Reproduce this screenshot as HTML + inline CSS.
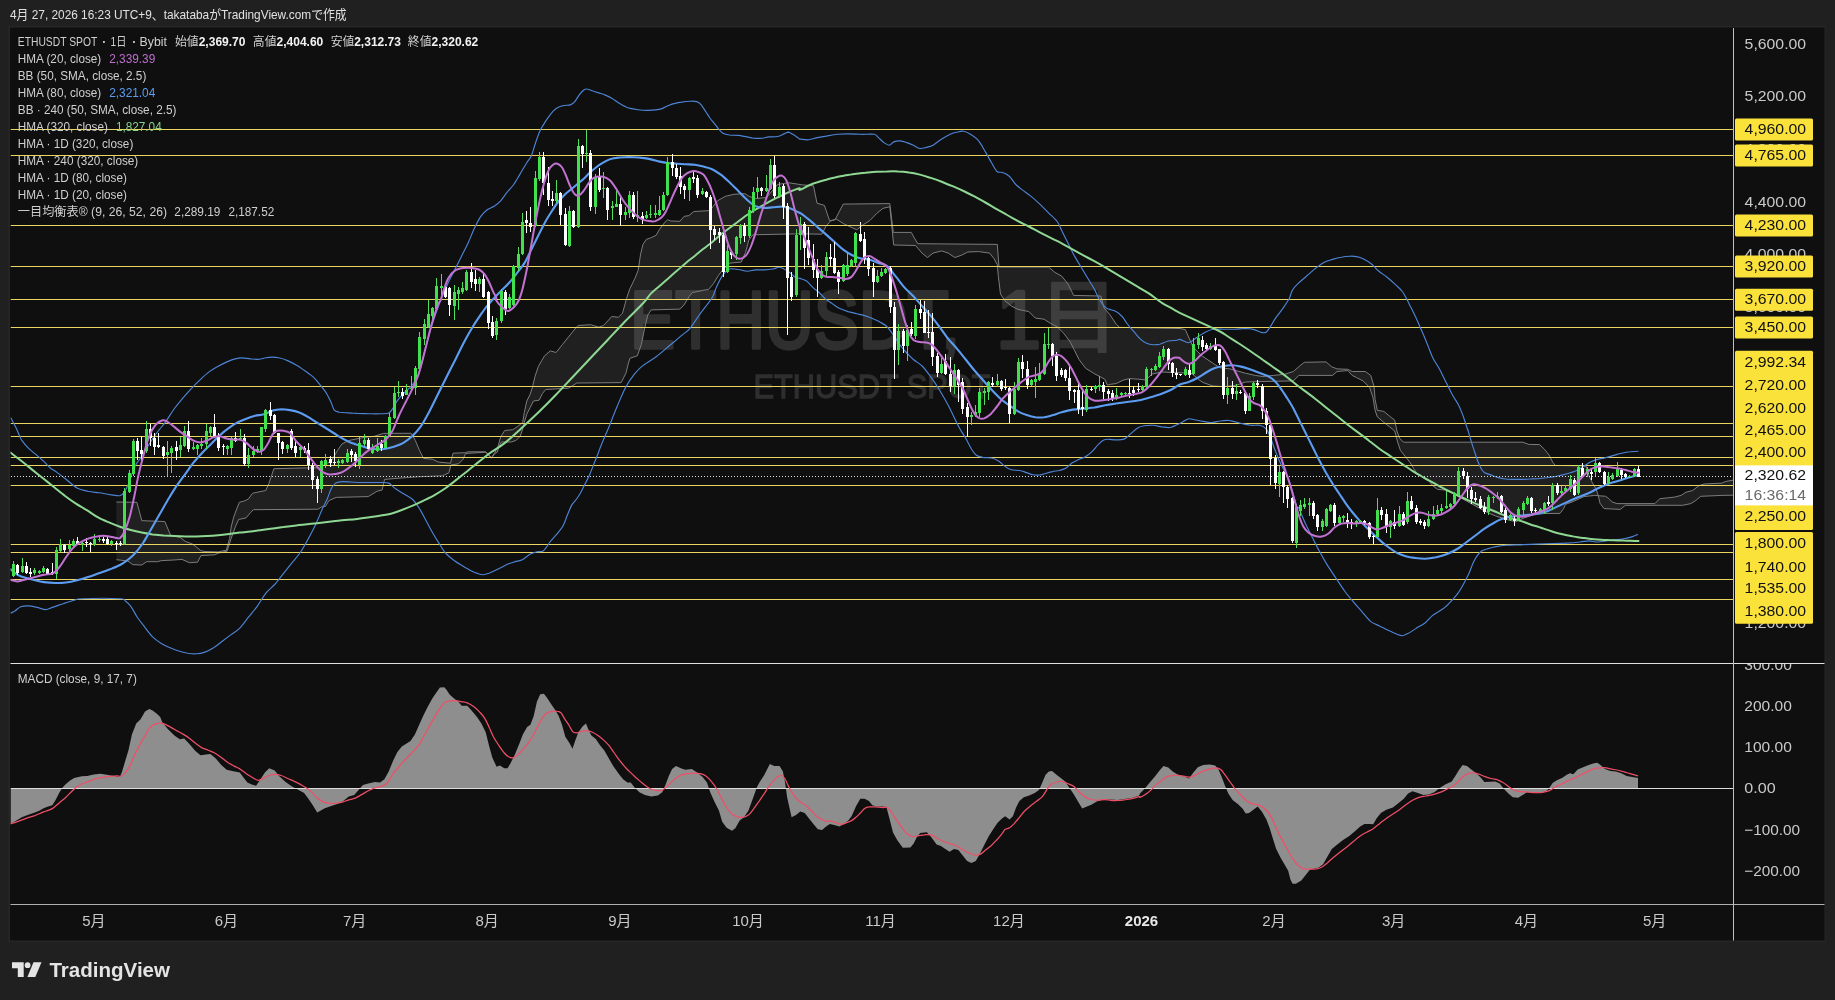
<!DOCTYPE html><html lang="ja"><head><meta charset="utf-8"><title>ETHUSDT SPOT chart</title>
<style>html,body{margin:0;padding:0;background:#202020;overflow:hidden}svg{display:block}text{font-family:"Liberation Sans", "Noto Sans CJK JP", sans-serif;white-space:pre}</style></head><body>
<svg width="1835" height="1000" viewBox="0 0 1835 1000">
<g>
<rect x="0" y="0" width="1835" height="1000" fill="#202020"/>
<rect x="8.5" y="26" width="1817" height="916" fill="#262626"/>
<rect x="10" y="27.5" width="1814.5" height="913" fill="#0f0f0f"/>
<defs><filter id="nf" x="-5%" y="-30%" width="110%" height="160%"><feOffset dx="0" dy="0"/></filter><clipPath id="cm"><rect x="10.5" y="28" width="1723" height="635"/></clipPath><clipPath id="cd"><rect x="10.5" y="664" width="1723" height="240"/></clipPath><clipPath id="ca"><rect x="1734" y="28" width="90.5" height="635.5"/></clipPath><clipPath id="cb"><rect x="1734" y="664" width="90.5" height="240"/></clipPath></defs>
<g fill="#2b2b2b">
<g filter="url(#nf)"><text x="630.0" y="348.0" font-size="81" fill="#2f2f2f" text-anchor="start" font-weight="normal" textLength="330.0" lengthAdjust="spacingAndGlyphs" stroke="#2f2f2f" stroke-width="3.4" stroke-linejoin="round">ETHUSDT,</text></g>
<g filter="url(#nf)"><text x="996.0" y="348.0" font-size="81" fill="#2f2f2f" text-anchor="start" font-weight="normal" stroke="#2f2f2f" stroke-width="3.4" stroke-linejoin="round">1</text></g>
<g filter="url(#nf)"><text x="1038.0" y="346.0" font-size="81" fill="#2f2f2f" text-anchor="start" font-weight="normal" stroke="#2f2f2f" stroke-width="2.4" stroke-linejoin="round">日</text></g>
<g filter="url(#nf)"><text x="753.5" y="397.5" font-size="33.5" fill="#2f2f2f" text-anchor="start" font-weight="normal" textLength="237.0" lengthAdjust="spacingAndGlyphs" stroke="#2f2f2f" stroke-width="1.3">ETHUSDT SPOT</text></g>
</g>
<g clip-path="url(#cm)">
<path d="M116.4,502.0 L136.9,502.3 L141.8,520.7 L164.8,521.5 L170.5,535.1 L180.4,537.6 L185.3,541.4 L192.7,544.1 L196.8,547.4 L200.9,550.7 L205.0,551.5 L218.1,551.9 L226.3,550.2 L229.6,538.4 L231.2,526.9 L233.7,517.1 L237.0,508.1 L239.4,502.3 L244.3,501.0 L248.4,499.0 L252.5,493.3 L257.5,492.2 L265.7,490.5 L268.9,483.5 L271.4,476.1 L273.9,468.7 L306.7,467.9 L318.0,467.8 L331.0,461.3 L337.6,450.4 L342.0,443.9 L348.5,440.6 L361.6,437.8 L374.7,436.2 L383.4,433.4 L393.1,433.3 L411.2,433.3 L415.3,440.4 L419.4,450.2 L423.5,458.4 L432.5,459.2 L438.2,462.0 L450.5,463.3 L453.0,453.2 L465.3,452.7 L467.7,451.8 L485.8,451.8 L491.5,457.6 L494.8,452.7 L498.1,446.1 L500.6,437.1 L504.7,430.5 L512.9,429.7 L517.8,426.4 L522.7,422.3 L524.3,412.5 L526.8,401.0 L530.1,394.4 L532.5,387.1 L535.0,376.4 L538.3,366.6 L541.6,360.8 L544.6,355.8 L550.3,350.9 L556.1,352.5 L562.6,344.3 L569.2,336.1 L575.8,327.9 L578.2,325.5 L590.5,324.7 L598.7,327.1 L603.6,325.5 L611.8,316.5 L618.4,317.3 L622.5,313.2 L626.6,298.4 L629.9,288.6 L634.8,278.7 L638.1,270.5 L640.6,254.1 L643.0,244.3 L646.3,239.4 L651.2,237.7 L656.1,235.3 L659.4,229.5 L664.3,223.0 L667.6,219.7 L670.9,221.0 L679.9,221.3 L684.0,216.4 L688.9,215.6 L693.9,211.5 L709.9,210.6 L713.2,206.3 L717.5,200.8 L725.2,196.4 L733.9,194.3 L744.8,193.6 L749.2,196.4 L755.7,198.6 L766.6,197.5 L777.5,184.5 L788.4,182.7 L802.6,184.9 L813.5,185.8 L817.0,203.2 L824.4,205.4 L829.6,220.6 L834.9,220.0 L843.2,204.1 L889.8,203.6 L893.3,232.4 L911.2,232.4 L917.7,243.7 L997.3,244.4 L999.0,267.0 L1048.5,267.0 L1055.0,272.5 L1061.6,276.0 L1068.1,284.0 L1073.6,295.4 L1100.8,296.0 L1104.1,308.0 L1109.8,314.6 L1116.4,324.4 L1119.7,327.4 L1180.0,328.5 L1185.3,329.6 L1193.0,347.0 L1201.8,355.8 L1214.9,364.5 L1220.3,367.8 L1230.0,368.9 L1245.4,373.2 L1255.2,375.4 L1262.8,376.5 L1273.7,375.4 L1284.6,374.3 L1293.4,371.5 L1298.8,366.7 L1304.3,362.3 L1326.0,361.9 L1331.5,366.7 L1337.0,368.9 L1347.8,369.3 L1352.2,371.5 L1365.3,371.5 L1370.7,375.4 L1374.0,386.3 L1375.1,399.4 L1377.3,410.3 L1383.8,411.4 L1390.4,416.8 L1394.7,420.1 L1396.9,431.0 L1399.8,438.4 L1403.4,442.2 L1522.8,442.2 L1528.8,444.4 L1539.6,444.6 L1544.4,449.2 L1549.2,455.2 L1552.8,462.4 L1555.2,465.4 L1576.8,465.8 L1586.0,466.0 L1589.4,476.8 L1592.4,482.8 L1596.0,488.8 L1598.4,496.0 L1600.0,503.2 L1604.0,508.6 L1620.4,509.4 L1625.3,505.3 L1682.7,505.3 L1690.9,503.6 L1695.9,500.4 L1700.8,496.3 L1722.1,495.4 L1740.0,495.1 L1740.0,479.0 L1725.4,481.5 L1722.1,483.1 L1704.1,484.0 L1699.1,485.6 L1692.6,490.5 L1686.0,492.2 L1681.1,495.4 L1674.5,497.1 L1659.8,498.7 L1654.9,503.6 L1617.1,503.6 L1612.2,502.0 L1608.9,498.7 L1605.7,496.3 L1594.8,495.4 L1584.0,496.6 L1572.0,502.0 L1565.4,504.4 L1563.6,508.6 L1560.0,513.4 L1544.4,513.5 L1534.8,514.5 L1524.0,518.0 L1515.7,521.8 L1507.0,519.6 L1495.2,515.8 L1488.0,512.8 L1449.6,491.8 L1444.8,490.0 L1437.6,489.4 L1432.8,485.8 L1428.0,479.8 L1422.0,476.8 L1417.2,473.8 L1413.6,468.4 L1410.0,462.4 L1405.2,456.4 L1400.4,450.4 L1398.0,443.2 L1394.7,431.0 L1389.3,426.6 L1383.8,422.3 L1377.3,416.8 L1375.1,410.3 L1372.9,397.2 L1369.6,387.4 L1363.1,380.9 L1356.6,377.6 L1352.2,375.4 L1347.8,370.6 L1337.0,371.5 L1332.6,375.4 L1298.8,375.4 L1293.4,380.9 L1261.7,381.5 L1245.4,382.0 L1236.7,385.2 L1223.6,386.7 L1212.7,385.9 L1203.0,382.5 L1198.4,379.4 L1192.0,373.6 L1185.0,373.0 L1162.0,372.0 L1152.0,374.0 L1146.0,380.0 L1141.0,379.4 L1129.5,378.6 L1123.0,380.2 L1116.4,383.5 L1110.7,384.3 L1107.4,385.1 L1104.9,379.4 L1100.8,377.0 L1094.3,373.7 L1085.6,368.2 L1079.0,359.5 L1074.7,350.8 L1070.3,342.1 L1063.8,333.4 L1057.2,326.8 L1050.7,323.5 L1044.1,319.2 L1035.4,318.1 L1028.9,311.6 L1018.0,309.4 L1011.4,306.1 L1004.9,300.7 L1000.5,294.1 L998.4,276.7 L997.3,264.7 L994.0,258.6 L989.6,253.1 L978.7,251.6 L967.8,252.0 L961.3,255.3 L954.8,257.5 L948.2,253.1 L941.7,250.9 L933.0,253.1 L927.5,257.5 L922.0,253.1 L915.5,245.5 L893.7,245.0 L889.8,206.7 L882.8,208.4 L876.3,213.9 L870.0,220.4 L863.2,224.8 L856.7,229.8 L843.6,223.7 L836.0,218.9 L830.5,221.1 L826.2,225.9 L821.8,234.2 L800.0,233.8 L752.9,234.8 L748.8,240.2 L745.5,252.5 L741.4,262.0 L729.9,263.1 L723.4,268.9 L718.5,275.4 L713.5,283.6 L708.6,289.4 L703.7,290.2 L692.2,292.7 L688.9,296.8 L684.0,305.0 L679.9,309.1 L651.2,309.9 L647.9,314.8 L644.7,327.9 L641.4,344.3 L637.3,355.8 L629.9,358.3 L628.2,364.0 L626.0,373.1 L621.1,382.6 L576.8,383.0 L568.6,388.2 L545.7,389.5 L542.4,393.6 L539.1,400.2 L533.4,401.0 L530.1,407.6 L526.8,414.1 L524.3,422.3 L522.7,428.9 L520.2,436.3 L516.1,440.4 L511.2,442.0 L501.4,442.0 L498.9,446.9 L497.3,452.2 L494.8,453.5 L491.5,458.1 L488.2,455.1 L485.8,452.2 L465.6,453.5 L462.8,459.7 L458.4,463.8 L450.9,465.0 L448.9,472.8 L442.3,475.8 L417.7,476.8 L400.0,478.1 L384.6,479.4 L382.1,490.0 L377.2,491.2 L368.2,496.6 L336.2,497.4 L328.8,500.7 L325.5,506.4 L321.4,506.9 L318.1,509.2 L253.4,509.7 L250.9,512.2 L246.0,517.9 L238.6,519.5 L235.3,526.9 L231.2,538.4 L227.1,551.2 L218.1,553.2 L214.8,554.8 L200.9,555.6 L197.6,562.2 L189.4,562.7 L182.0,559.4 L172.2,560.1 L161.5,560.6 L157.4,561.7 L146.7,561.7 L141.8,565.0 L132.8,564.7 L127.9,561.0 L116.4,559.7 Z" fill="#ffffff" fill-opacity="0.075" stroke="none"/>
<path d="M116.4,502.0 L136.9,502.3 L141.8,520.7 L164.8,521.5 L170.5,535.1 L180.4,537.6 L185.3,541.4 L192.7,544.1 L196.8,547.4 L200.9,550.7 L205.0,551.5 L218.1,551.9 L226.3,550.2 L229.6,538.4 L231.2,526.9 L233.7,517.1 L237.0,508.1 L239.4,502.3 L244.3,501.0 L248.4,499.0 L252.5,493.3 L257.5,492.2 L265.7,490.5 L268.9,483.5 L271.4,476.1 L273.9,468.7 L306.7,467.9 L318.0,467.8 L331.0,461.3 L337.6,450.4 L342.0,443.9 L348.5,440.6 L361.6,437.8 L374.7,436.2 L383.4,433.4 L393.1,433.3 L411.2,433.3 L415.3,440.4 L419.4,450.2 L423.5,458.4 L432.5,459.2 L438.2,462.0 L450.5,463.3 L453.0,453.2 L465.3,452.7 L467.7,451.8 L485.8,451.8 L491.5,457.6 L494.8,452.7 L498.1,446.1 L500.6,437.1 L504.7,430.5 L512.9,429.7 L517.8,426.4 L522.7,422.3 L524.3,412.5 L526.8,401.0 L530.1,394.4 L532.5,387.1 L535.0,376.4 L538.3,366.6 L541.6,360.8 L544.6,355.8 L550.3,350.9 L556.1,352.5 L562.6,344.3 L569.2,336.1 L575.8,327.9 L578.2,325.5 L590.5,324.7 L598.7,327.1 L603.6,325.5 L611.8,316.5 L618.4,317.3 L622.5,313.2 L626.6,298.4 L629.9,288.6 L634.8,278.7 L638.1,270.5 L640.6,254.1 L643.0,244.3 L646.3,239.4 L651.2,237.7 L656.1,235.3 L659.4,229.5 L664.3,223.0 L667.6,219.7 L670.9,221.0 L679.9,221.3 L684.0,216.4 L688.9,215.6 L693.9,211.5 L709.9,210.6 L713.2,206.3 L717.5,200.8 L725.2,196.4 L733.9,194.3 L744.8,193.6 L749.2,196.4 L755.7,198.6 L766.6,197.5 L777.5,184.5 L788.4,182.7 L802.6,184.9 L813.5,185.8 L817.0,203.2 L824.4,205.4 L829.6,220.6 L834.9,220.0 L843.2,204.1 L889.8,203.6 L893.3,232.4 L911.2,232.4 L917.7,243.7 L997.3,244.4 L999.0,267.0 L1048.5,267.0 L1055.0,272.5 L1061.6,276.0 L1068.1,284.0 L1073.6,295.4 L1100.8,296.0 L1104.1,308.0 L1109.8,314.6 L1116.4,324.4 L1119.7,327.4 L1180.0,328.5 L1185.3,329.6 L1193.0,347.0 L1201.8,355.8 L1214.9,364.5 L1220.3,367.8 L1230.0,368.9 L1245.4,373.2 L1255.2,375.4 L1262.8,376.5 L1273.7,375.4 L1284.6,374.3 L1293.4,371.5 L1298.8,366.7 L1304.3,362.3 L1326.0,361.9 L1331.5,366.7 L1337.0,368.9 L1347.8,369.3 L1352.2,371.5 L1365.3,371.5 L1370.7,375.4 L1374.0,386.3 L1375.1,399.4 L1377.3,410.3 L1383.8,411.4 L1390.4,416.8 L1394.7,420.1 L1396.9,431.0 L1399.8,438.4 L1403.4,442.2 L1522.8,442.2 L1528.8,444.4 L1539.6,444.6 L1544.4,449.2 L1549.2,455.2 L1552.8,462.4 L1555.2,465.4 L1576.8,465.8 L1586.0,466.0 L1589.4,476.8 L1592.4,482.8 L1596.0,488.8 L1598.4,496.0 L1600.0,503.2 L1604.0,508.6 L1620.4,509.4 L1625.3,505.3 L1682.7,505.3 L1690.9,503.6 L1695.9,500.4 L1700.8,496.3 L1722.1,495.4 L1740.0,495.1" fill="none" stroke="#7c7c7c" stroke-width="1" stroke-linejoin="round"/>
<path d="M116.4,559.7 L127.9,561.0 L132.8,564.7 L141.8,565.0 L146.7,561.7 L157.4,561.7 L161.5,560.6 L172.2,560.1 L182.0,559.4 L189.4,562.7 L197.6,562.2 L200.9,555.6 L214.8,554.8 L218.1,553.2 L227.1,551.2 L231.2,538.4 L235.3,526.9 L238.6,519.5 L246.0,517.9 L250.9,512.2 L253.4,509.7 L318.1,509.2 L321.4,506.9 L325.5,506.4 L328.8,500.7 L336.2,497.4 L368.2,496.6 L377.2,491.2 L382.1,490.0 L384.6,479.4 L400.0,478.1 L417.7,476.8 L442.3,475.8 L448.9,472.8 L450.9,465.0 L458.4,463.8 L462.8,459.7 L465.6,453.5 L485.8,452.2 L488.2,455.1 L491.5,458.1 L494.8,453.5 L497.3,452.2 L498.9,446.9 L501.4,442.0 L511.2,442.0 L516.1,440.4 L520.2,436.3 L522.7,428.9 L524.3,422.3 L526.8,414.1 L530.1,407.6 L533.4,401.0 L539.1,400.2 L542.4,393.6 L545.7,389.5 L568.6,388.2 L576.8,383.0 L621.1,382.6 L626.0,373.1 L628.2,364.0 L629.9,358.3 L637.3,355.8 L641.4,344.3 L644.7,327.9 L647.9,314.8 L651.2,309.9 L679.9,309.1 L684.0,305.0 L688.9,296.8 L692.2,292.7 L703.7,290.2 L708.6,289.4 L713.5,283.6 L718.5,275.4 L723.4,268.9 L729.9,263.1 L741.4,262.0 L745.5,252.5 L748.8,240.2 L752.9,234.8 L800.0,233.8 L821.8,234.2 L826.2,225.9 L830.5,221.1 L836.0,218.9 L843.6,223.7 L856.7,229.8 L863.2,224.8 L870.0,220.4 L876.3,213.9 L882.8,208.4 L889.8,206.7 L893.7,245.0 L915.5,245.5 L922.0,253.1 L927.5,257.5 L933.0,253.1 L941.7,250.9 L948.2,253.1 L954.8,257.5 L961.3,255.3 L967.8,252.0 L978.7,251.6 L989.6,253.1 L994.0,258.6 L997.3,264.7 L998.4,276.7 L1000.5,294.1 L1004.9,300.7 L1011.4,306.1 L1018.0,309.4 L1028.9,311.6 L1035.4,318.1 L1044.1,319.2 L1050.7,323.5 L1057.2,326.8 L1063.8,333.4 L1070.3,342.1 L1074.7,350.8 L1079.0,359.5 L1085.6,368.2 L1094.3,373.7 L1100.8,377.0 L1104.9,379.4 L1107.4,385.1 L1110.7,384.3 L1116.4,383.5 L1123.0,380.2 L1129.5,378.6 L1141.0,379.4 L1146.0,380.0 L1152.0,374.0 L1162.0,372.0 L1185.0,373.0 L1192.0,373.6 L1198.4,379.4 L1203.0,382.5 L1212.7,385.9 L1223.6,386.7 L1236.7,385.2 L1245.4,382.0 L1261.7,381.5 L1293.4,380.9 L1298.8,375.4 L1332.6,375.4 L1337.0,371.5 L1347.8,370.6 L1352.2,375.4 L1356.6,377.6 L1363.1,380.9 L1369.6,387.4 L1372.9,397.2 L1375.1,410.3 L1377.3,416.8 L1383.8,422.3 L1389.3,426.6 L1394.7,431.0 L1398.0,443.2 L1400.4,450.4 L1405.2,456.4 L1410.0,462.4 L1413.6,468.4 L1417.2,473.8 L1422.0,476.8 L1428.0,479.8 L1432.8,485.8 L1437.6,489.4 L1444.8,490.0 L1449.6,491.8 L1488.0,512.8 L1495.2,515.8 L1507.0,519.6 L1515.7,521.8 L1524.0,518.0 L1534.8,514.5 L1544.4,513.5 L1560.0,513.4 L1563.6,508.6 L1565.4,504.4 L1572.0,502.0 L1584.0,496.6 L1594.8,495.4 L1605.7,496.3 L1608.9,498.7 L1612.2,502.0 L1617.1,503.6 L1654.9,503.6 L1659.8,498.7 L1674.5,497.1 L1681.1,495.4 L1686.0,492.2 L1692.6,490.5 L1699.1,485.6 L1704.1,484.0 L1722.1,483.1 L1725.4,481.5 L1740.0,479.0" fill="none" stroke="#7c7c7c" stroke-width="1" stroke-linejoin="round"/>
<rect x="10.5" y="129.0" width="1723" height="1" fill="#ecd662"/>
<rect x="10.5" y="155.0" width="1723" height="1" fill="#ecd662"/>
<rect x="10.5" y="225.0" width="1723" height="1" fill="#ecd662"/>
<rect x="10.5" y="266.0" width="1723" height="1" fill="#ecd662"/>
<rect x="10.5" y="299.0" width="1723" height="1" fill="#ecd662"/>
<rect x="10.5" y="327.0" width="1723" height="1" fill="#ecd662"/>
<rect x="10.5" y="386.0" width="1723" height="1" fill="#ecd662"/>
<rect x="10.5" y="423.0" width="1723" height="1" fill="#ecd662"/>
<rect x="10.5" y="436.0" width="1723" height="1" fill="#ecd662"/>
<rect x="10.5" y="457.0" width="1723" height="1" fill="#ecd662"/>
<rect x="10.5" y="465.0" width="1723" height="1" fill="#ecd662"/>
<rect x="10.5" y="485.0" width="1723" height="1" fill="#ecd662"/>
<rect x="10.5" y="544.0" width="1723" height="1" fill="#ecd662"/>
<rect x="10.5" y="552.0" width="1723" height="1" fill="#ecd662"/>
<rect x="10.5" y="579.0" width="1723" height="1" fill="#ecd662"/>
<rect x="10.5" y="599.0" width="1723" height="1" fill="#ecd662"/>
<path d="M10.6,417.6 C11.3,419.0 13.9,423.4 15.4,426.4 C16.9,429.4 18.7,434.0 19.8,436.3 C20.8,438.6 20.6,438.8 22.0,440.7 C23.4,442.6 26.5,446.3 28.6,448.4 C30.7,450.5 32.7,451.8 35.2,453.9 C37.7,456.0 41.5,459.3 44.0,461.6 C46.4,463.9 48.5,466.4 50.6,468.2 C52.7,469.9 54.7,470.8 57.2,472.6 C59.6,474.3 62.8,476.7 66.0,479.2 C69.1,481.6 73.5,486.0 77.0,488.0 C80.5,489.9 84.5,490.5 88.0,491.3 C91.5,492.0 95.4,492.3 99.0,492.8 C102.5,493.3 106.6,494.1 110.0,494.6 C113.3,495.0 117.6,496.0 119.9,495.7 C122.1,495.3 122.9,494.3 124.3,492.4 C125.7,490.4 127.4,486.6 128.7,483.6 C129.9,480.6 130.7,476.8 132.0,473.7 C133.2,470.5 134.8,466.5 136.4,463.8 C137.9,461.1 139.6,459.8 141.4,456.9 C143.3,454.1 145.5,449.9 148.0,446.0 C150.4,442.2 153.9,436.8 156.7,433.0 C159.5,429.1 162.6,425.9 165.4,422.1 C168.2,418.2 171.3,412.8 174.1,409.0 C176.9,405.2 180.0,401.4 182.8,398.1 C185.6,394.8 188.8,391.2 191.6,388.3 C194.3,385.3 197.5,382.2 200.3,379.6 C203.1,376.9 206.2,374.0 209.0,371.9 C211.8,369.8 214.9,368.1 217.7,366.5 C220.5,364.9 223.6,363.3 226.4,362.1 C229.2,360.9 232.7,359.6 235.1,358.9 C237.6,358.2 239.2,357.8 241.7,357.8 C244.1,357.8 247.6,358.6 250.4,358.9 C253.2,359.1 256.7,359.5 259.1,359.3 C261.6,359.1 263.6,358.1 265.7,357.8 C267.8,357.4 270.1,357.1 272.2,357.1 C274.3,357.1 276.3,357.2 278.7,357.8 C281.2,358.3 284.7,359.4 287.5,360.6 C290.3,361.8 293.4,363.3 296.2,365.0 C299.0,366.6 302.1,368.9 304.9,370.8 C307.7,372.8 311.2,375.1 313.6,377.4 C316.1,379.7 318.1,382.4 320.2,385.0 C322.3,387.6 325.0,390.9 326.7,393.7 C328.4,396.5 329.8,399.8 331.1,402.5 C332.3,405.1 332.9,408.5 334.3,410.1 C335.7,411.7 337.5,411.8 339.8,412.3 C342.0,412.7 345.7,412.7 348.5,412.9 C351.3,413.1 353.7,413.2 357.2,413.4 C360.7,413.5 366.5,413.7 370.3,413.8 C374.1,413.9 378.2,413.9 381.2,413.8 C384.2,413.6 386.9,413.9 388.8,412.9 C390.7,412.0 391.9,409.8 393.2,407.9 C394.5,406.1 395.2,403.6 396.8,401.4 C398.4,399.1 400.9,396.3 403.4,393.7 C405.8,391.1 409.6,388.2 412.1,385.0 C414.5,381.9 416.5,379.7 418.6,374.1 C420.7,368.5 422.9,357.9 425.0,350.0 C427.1,342.1 429.6,332.7 432.0,325.0 C434.4,317.3 437.4,308.8 440.0,302.0 C442.6,295.2 446.0,287.8 448.3,282.5 C450.7,277.3 452.8,273.7 454.9,269.5 C457.0,265.3 459.3,260.6 461.4,256.4 C463.5,252.2 465.9,247.8 468.0,243.3 C470.0,238.8 472.4,232.4 474.5,228.0 C476.6,223.7 478.9,219.0 481.0,216.1 C483.1,213.1 485.5,211.1 487.6,209.5 C489.7,208.0 492.0,207.6 494.1,206.3 C496.2,204.9 498.6,203.1 500.7,200.8 C502.7,198.5 505.1,194.7 507.2,192.1 C509.3,189.5 511.6,187.4 513.7,184.5 C515.8,181.5 518.2,177.0 520.3,173.6 C522.4,170.1 525.1,165.4 526.8,162.7 C528.6,159.9 529.8,159.3 531.2,156.1 C532.6,153.0 534.1,147.0 535.5,143.0 C536.9,139.0 538.5,134.2 539.9,131.0 C541.3,127.9 542.9,125.7 544.3,123.4 C545.6,121.1 547.2,118.8 548.6,116.9 C550.0,115.0 551.6,112.9 553.0,111.4 C554.4,110.0 555.6,108.7 557.3,107.7 C559.1,106.8 561.8,106.0 563.9,105.5 C566.0,105.1 568.7,105.5 570.4,104.9 C572.2,104.3 573.4,103.2 574.8,101.6 C576.2,100.0 577.7,96.9 579.1,95.1 C580.5,93.3 582.3,91.3 583.5,90.3 C584.7,89.3 585.4,88.9 586.8,89.0 C588.2,89.0 590.3,90.1 592.2,90.7 C594.1,91.3 596.7,92.2 598.7,92.9 C600.8,93.6 603.2,94.2 605.3,95.1 C607.4,96.0 609.7,97.1 611.8,98.3 C613.9,99.6 616.3,101.4 618.4,102.7 C620.5,104.0 622.8,105.5 624.9,106.4 C627.0,107.4 629.4,108.1 631.4,108.6 C633.5,109.1 635.5,109.4 638.0,109.7 C640.4,110.0 643.9,110.3 646.7,110.3 C649.5,110.4 653.0,110.2 655.4,109.9 C657.9,109.6 659.9,109.3 662.0,108.6 C664.1,107.9 666.4,106.4 668.5,105.5 C670.6,104.7 672.9,103.9 675.0,103.4 C677.1,102.8 679.1,102.4 681.6,102.1 C684.0,101.7 687.9,101.3 690.3,101.2 C692.7,101.1 695.1,101.0 696.8,101.6 C698.6,102.2 699.8,103.3 701.2,104.9 C702.6,106.5 704.2,109.3 705.6,111.4 C707.0,113.5 708.5,116.0 709.9,118.0 C711.3,119.9 712.9,121.7 714.3,123.4 C715.7,125.2 717.2,127.3 718.6,128.9 C720.0,130.4 721.3,132.2 723.0,133.2 C724.7,134.2 727.1,134.6 729.5,135.0 C732.0,135.3 735.5,135.1 738.3,135.4 C741.0,135.7 744.5,136.5 747.0,136.9 C749.4,137.4 751.1,138.0 753.5,138.2 C756.0,138.4 759.8,138.4 762.2,138.2 C764.7,138.0 766.3,137.2 768.8,136.9 C771.2,136.7 775.1,137.0 777.5,136.5 C779.9,136.0 782.3,134.6 784.0,133.9 C785.8,133.2 787.0,132.1 788.4,132.1 C789.8,132.2 791.0,133.3 792.8,134.3 C794.5,135.4 798.1,137.9 799.3,138.7 C800.5,139.4 798.5,138.9 800.0,139.1 C801.5,139.3 805.9,140.0 808.7,139.8 C811.5,139.5 814.6,138.2 817.4,137.6 C820.2,137.0 823.0,136.6 826.2,136.1 C829.3,135.5 833.6,134.7 837.1,134.3 C840.5,134.0 844.1,133.9 848.0,133.9 C851.8,133.9 856.9,134.2 861.0,134.3 C865.2,134.4 871.3,133.8 874.1,134.3 C876.9,134.8 876.9,136.3 878.5,137.6 C880.0,138.9 882.2,141.4 883.9,142.6 C885.7,143.8 887.8,145.3 889.4,145.2 C890.9,145.1 892.0,142.6 893.7,141.9 C895.5,141.2 898.2,140.8 900.3,140.9 C902.4,141.0 904.7,141.9 906.8,142.6 C908.9,143.3 911.3,144.3 913.4,145.2 C915.4,146.2 917.8,148.1 919.9,148.5 C922.0,148.8 924.3,147.9 926.4,147.4 C928.5,146.9 930.9,146.3 933.0,145.2 C935.1,144.1 937.4,141.8 939.5,140.4 C941.6,139.0 944.0,137.6 946.0,136.5 C948.1,135.3 950.5,134.0 952.6,133.2 C954.7,132.5 957.4,132.0 959.1,131.7 C960.9,131.4 961.7,130.9 963.5,131.3 C965.2,131.6 967.9,132.7 970.0,133.9 C972.1,135.1 974.8,137.0 976.6,138.7 C978.3,140.3 979.5,142.0 980.9,144.1 C982.3,146.2 983.9,149.3 985.3,151.8 C986.7,154.2 988.3,156.9 989.6,159.4 C991.0,161.8 992.8,165.0 994.0,167.0 C995.2,169.0 995.9,170.9 997.3,171.8 C998.7,172.7 1000.8,171.8 1002.7,172.5 C1004.6,173.2 1007.2,174.3 1009.3,176.2 C1011.4,178.1 1013.7,182.3 1015.8,184.5 C1017.9,186.6 1019.9,188.0 1022.3,189.9 C1024.8,191.8 1028.3,194.2 1031.1,196.4 C1033.9,198.7 1037.0,201.5 1039.8,204.1 C1042.6,206.7 1045.7,210.0 1048.5,212.8 C1051.3,215.6 1055.1,218.7 1057.2,221.5 C1059.3,224.3 1060.2,227.4 1061.6,230.2 C1063.0,233.0 1064.5,236.2 1065.9,238.9 C1067.3,241.7 1068.9,244.9 1070.3,247.7 C1071.7,250.5 1072.9,253.2 1074.7,256.4 C1076.4,259.5 1079.1,263.8 1081.2,267.3 C1083.3,270.8 1085.6,274.7 1087.7,278.2 C1089.8,281.7 1092.4,285.6 1094.3,289.1 C1096.2,292.6 1098.0,297.1 1099.7,300.0 C1101.5,302.9 1103.6,305.7 1105.2,307.2 C1106.7,308.7 1107.8,308.7 1109.5,309.4 C1111.3,310.1 1114.0,310.3 1116.1,311.6 C1118.2,312.8 1120.9,315.1 1122.6,317.0 C1124.4,318.9 1125.2,321.3 1127.0,323.5 C1128.7,325.8 1131.4,328.7 1133.5,331.2 C1135.6,333.6 1138.0,336.9 1140.1,338.8 C1142.1,340.7 1144.5,342.2 1146.6,343.2 C1148.7,344.1 1151.0,344.5 1153.1,344.7 C1155.2,344.9 1157.2,344.8 1159.7,344.3 C1162.1,343.7 1165.6,341.6 1168.4,341.0 C1171.2,340.4 1175.3,340.6 1177.1,340.3 C1179.0,340.1 1178.1,339.1 1180.0,339.4 C1181.9,339.8 1186.3,342.9 1188.7,342.7 C1191.2,342.5 1192.8,339.9 1195.3,338.4 C1197.7,336.8 1201.2,334.4 1204.0,332.9 C1206.8,331.4 1209.6,329.8 1212.7,329.2 C1215.8,328.6 1220.1,329.2 1223.6,329.2 C1227.1,329.2 1231.0,329.3 1234.5,329.2 C1238.0,329.1 1242.3,328.5 1245.4,328.5 C1248.5,328.6 1251.7,329.0 1254.1,329.6 C1256.6,330.2 1258.7,331.8 1260.7,332.2 C1262.6,332.7 1264.5,333.2 1266.1,332.2 C1267.7,331.3 1268.9,328.7 1270.5,326.4 C1272.0,324.0 1274.0,320.4 1275.9,317.6 C1277.8,314.9 1280.4,311.9 1282.5,308.9 C1284.5,306.0 1287.4,302.1 1289.0,299.1 C1290.6,296.1 1290.9,292.8 1292.3,290.4 C1293.7,288.0 1295.4,286.1 1297.7,283.9 C1300.0,281.6 1303.6,278.7 1306.4,276.2 C1309.2,273.8 1312.4,270.8 1315.1,268.6 C1317.9,266.4 1321.1,264.0 1323.9,262.5 C1326.7,261.0 1329.8,260.3 1332.6,259.4 C1335.4,258.6 1338.5,257.8 1341.3,257.3 C1344.1,256.7 1347.6,256.3 1350.0,256.2 C1352.5,256.1 1354.5,256.2 1356.6,256.6 C1358.7,257.0 1360.7,257.6 1363.1,258.8 C1365.5,260.0 1369.4,262.3 1371.8,264.2 C1374.3,266.2 1375.9,268.7 1378.4,270.8 C1380.8,272.9 1384.3,275.0 1387.1,277.3 C1389.9,279.6 1393.4,282.7 1395.8,284.9 C1398.2,287.2 1400.6,289.2 1402.3,291.5 C1404.1,293.8 1405.3,296.5 1406.7,299.1 C1408.1,301.7 1409.7,305.0 1411.1,307.8 C1412.5,310.6 1414.0,313.6 1415.4,316.6 C1416.8,319.5 1418.4,323.2 1419.8,326.4 C1421.2,329.5 1422.7,332.9 1424.1,336.2 C1425.5,339.5 1427.1,343.6 1428.5,347.1 C1429.9,350.6 1431.1,354.5 1432.9,358.0 C1434.6,361.5 1437.3,365.0 1439.4,368.9 C1441.5,372.7 1443.8,377.8 1445.9,381.9 C1448.0,386.1 1450.4,391.2 1452.5,395.0 C1454.6,398.9 1457.3,402.4 1459.0,405.9 C1460.8,409.4 1462.0,413.0 1463.4,416.8 C1464.8,420.7 1467.0,427.8 1467.7,429.9 C1468.5,432.0 1467.3,428.0 1467.9,429.8 C1468.4,431.7 1470.1,437.9 1471.2,441.3 C1472.2,444.7 1473.4,448.0 1474.4,451.2 C1475.5,454.3 1476.7,458.2 1477.7,461.0 C1478.8,463.8 1480.0,466.5 1481.0,468.4 C1482.1,470.2 1482.7,471.4 1484.3,472.5 C1485.9,473.5 1488.7,474.2 1490.8,474.9 C1492.9,475.7 1495.0,476.7 1497.4,477.4 C1499.8,478.1 1503.0,478.7 1505.6,479.0 C1508.2,479.4 1511.2,479.3 1513.8,479.4 C1516.4,479.4 1519.4,479.4 1522.0,479.4 C1524.6,479.3 1527.6,479.2 1530.2,479.0 C1532.8,478.9 1535.8,478.9 1538.4,478.7 C1541.0,478.5 1544.0,478.1 1546.6,477.7 C1549.2,477.4 1552.2,477.0 1554.8,476.6 C1557.4,476.1 1560.4,475.6 1563.0,474.9 C1565.6,474.3 1568.9,473.3 1571.2,472.5 C1573.6,471.7 1575.7,471.1 1577.8,470.0 C1579.9,469.0 1582.2,467.2 1584.3,465.9 C1586.4,464.6 1588.8,462.9 1590.9,461.8 C1593.0,460.8 1595.4,460.0 1597.5,459.4 C1599.6,458.8 1601.9,458.5 1604.0,458.1 C1606.1,457.6 1608.5,457.0 1610.6,456.4 C1612.7,455.8 1615.0,455.0 1617.1,454.4 C1619.2,453.9 1621.6,453.2 1623.7,452.8 C1625.8,452.4 1627.9,451.9 1630.3,451.7 C1632.6,451.4 1637.1,451.2 1638.5,451.2" fill="none" stroke="#4d84d6" stroke-width="1.15"/>
<path d="M10.5,613.3 C11.2,612.9 13.6,611.7 15.3,610.7 C16.9,609.6 18.6,607.5 20.7,606.7 C22.8,606.0 25.7,605.8 28.3,605.9 C31.0,606.0 34.3,606.8 37.1,607.4 C39.8,608.0 43.3,609.6 45.8,609.6 C48.2,609.6 49.5,608.3 52.3,607.4 C55.1,606.5 59.7,604.8 63.2,603.7 C66.7,602.5 71.0,601.0 74.1,600.2 C77.3,599.4 75.5,598.9 82.8,598.7 C90.2,598.4 113.1,598.3 119.9,598.7 C126.7,599.0 123.6,599.6 125.3,600.9 C127.1,602.1 128.9,603.7 130.8,606.3 C132.7,608.9 135.2,614.1 137.3,617.2 C139.4,620.3 141.4,622.8 143.9,625.9 C146.3,629.1 149.8,634.0 152.6,636.8 C155.4,639.6 158.5,641.6 161.3,643.4 C164.1,645.1 167.2,646.5 170.0,647.7 C172.8,648.9 176.0,650.1 178.7,651.0 C181.5,651.9 184.7,652.7 187.5,653.2 C190.3,653.6 193.4,654.0 196.2,653.8 C199.0,653.7 202.1,653.1 204.9,652.1 C207.7,651.1 210.8,649.5 213.6,647.7 C216.4,646.0 219.6,643.3 222.3,641.2 C225.1,639.1 228.3,636.7 231.1,634.6 C233.9,632.6 237.0,630.9 239.8,628.1 C242.6,625.3 245.7,620.7 248.5,617.2 C251.3,613.7 254.4,610.1 257.2,606.3 C260.0,602.5 263.1,596.7 265.9,593.2 C268.7,589.7 271.9,587.6 274.7,584.5 C277.4,581.4 280.6,577.1 283.4,573.6 C286.2,570.1 289.3,566.2 292.1,562.7 C294.9,559.2 298.0,556.0 300.8,551.8 C303.6,547.6 307.1,541.1 309.5,536.6 C312.0,532.0 314.0,528.0 316.1,523.5 C318.2,518.9 320.9,512.1 322.6,508.2 C324.4,504.4 325.6,502.6 327.0,499.5 C328.4,496.4 329.9,491.2 331.3,488.6 C332.7,486.0 334.0,484.3 335.7,483.1 C337.4,482.0 338.4,481.7 342.2,481.6 C346.1,481.5 354.4,482.4 359.7,482.5 C364.9,482.6 371.7,482.5 374.9,482.5 C378.2,482.5 377.8,482.4 380.0,482.5 C382.2,482.6 386.3,482.2 388.7,483.1 C391.2,484.1 392.8,486.9 395.3,488.6 C397.7,490.3 401.2,492.3 404.0,494.0 C406.8,495.8 410.3,497.2 412.7,499.5 C415.1,501.8 417.1,504.9 419.2,508.2 C421.3,511.5 423.7,516.4 425.8,520.2 C427.9,524.0 430.2,528.5 432.3,532.2 C434.4,535.9 436.8,539.8 438.9,543.1 C440.9,546.4 443.0,550.1 445.4,552.9 C447.8,555.7 451.3,558.4 454.1,560.5 C456.9,562.6 460.0,564.3 462.8,566.0 C465.6,567.7 469.1,569.8 471.6,571.0 C474.0,572.2 476.2,573.0 478.1,573.6 C480.0,574.2 481.8,574.8 483.5,574.7 C485.3,574.6 486.7,574.0 489.0,573.2 C491.3,572.3 494.6,570.8 497.7,569.3 C500.9,567.8 505.8,565.0 508.6,563.8 C511.4,562.6 513.1,562.2 515.1,561.6 C517.2,561.0 519.2,561.3 521.7,560.1 C524.1,558.9 528.0,555.3 530.4,554.0 C532.9,552.7 534.9,552.3 536.9,551.8 C539.0,551.3 541.4,552.3 543.5,550.7 C545.6,549.2 547.9,544.6 550.0,542.0 C552.1,539.4 554.5,537.0 556.6,534.4 C558.7,531.8 561.4,528.8 563.1,525.7 C564.9,522.5 566.1,518.1 567.5,514.8 C568.9,511.4 570.4,507.4 571.8,504.9 C573.2,502.5 574.8,501.4 576.2,499.5 C577.6,497.6 579.1,495.4 580.5,493.0 C581.9,490.5 583.5,487.0 584.9,484.2 C586.3,481.4 587.9,478.7 589.3,475.5 C590.7,472.4 592.2,468.1 593.6,464.6 C595.0,461.1 596.8,456.9 598.0,453.7 C599.2,450.6 599.6,449.0 601.3,445.0 C602.9,441.0 605.7,434.7 608.3,428.6 C610.8,422.5 614.2,413.4 617.0,406.8 C619.8,400.2 622.9,392.4 625.7,387.2 C628.5,382.0 631.6,377.6 634.4,374.1 C637.2,370.6 639.6,368.2 643.1,365.4 C646.6,362.6 652.0,359.8 656.2,356.7 C660.4,353.5 665.1,349.3 669.3,345.8 C673.5,342.3 679.1,337.7 682.4,334.9 C685.7,332.1 687.2,331.7 690.0,328.3 C692.8,325.0 696.5,318.9 700.0,314.0 C703.5,309.1 709.5,302.1 712.1,297.8 C714.7,293.5 714.7,290.6 716.5,286.9 C718.2,283.2 720.9,277.8 723.0,274.9 C725.1,272.1 727.1,269.9 729.5,269.0 C732.0,268.2 735.5,269.1 738.3,269.5 C741.0,269.8 744.2,271.1 747.0,271.2 C749.8,271.3 752.9,270.1 755.7,269.9 C758.5,269.7 761.6,270.0 764.4,269.9 C767.2,269.8 770.7,269.4 773.1,269.0 C775.6,268.6 777.2,266.9 779.7,267.3 C782.1,267.7 786.0,270.1 788.4,271.6 C790.8,273.2 793.1,276.0 794.9,277.1 C796.8,278.2 798.1,277.8 800.0,278.4 C801.9,279.1 804.4,279.6 806.5,281.0 C808.6,282.5 811.0,285.7 813.1,287.6 C815.2,289.5 817.5,291.1 819.6,293.0 C821.7,294.9 824.1,297.8 826.2,299.6 C828.3,301.3 830.6,302.5 832.7,303.9 C834.8,305.3 836.8,307.1 839.2,308.3 C841.7,309.5 845.2,310.7 848.0,311.6 C850.7,312.4 853.9,313.0 856.7,313.7 C859.5,314.4 862.6,315.0 865.4,315.9 C868.2,316.8 871.7,318.1 874.1,319.2 C876.6,320.2 878.6,321.2 880.7,322.5 C882.7,323.7 885.1,324.7 887.2,326.8 C889.3,328.9 891.6,332.6 893.7,335.5 C895.8,338.5 898.2,342.6 900.3,345.3 C902.4,348.1 904.7,350.7 906.8,353.0 C908.9,355.2 910.9,357.4 913.4,359.5 C915.8,361.6 919.3,363.3 922.1,366.0 C924.9,368.8 928.0,373.1 930.8,376.9 C933.6,380.8 936.7,385.5 939.5,390.0 C942.3,394.6 945.1,399.4 948.2,405.3 C951.3,411.2 956.1,421.7 958.9,426.9 C961.6,432.1 963.3,434.1 965.4,437.8 C967.5,441.4 970.2,447.0 971.9,449.8 C973.7,452.5 974.6,454.0 976.3,455.2 C978.0,456.4 980.4,456.9 982.8,457.4 C985.3,457.8 989.1,457.5 991.6,458.0 C994.0,458.6 996.0,459.4 998.1,460.7 C1000.2,461.9 1002.5,464.6 1004.6,466.1 C1006.7,467.6 1008.7,469.1 1011.2,469.8 C1013.6,470.5 1017.4,470.0 1019.9,470.5 C1022.3,470.9 1024.3,471.9 1026.4,472.6 C1028.5,473.3 1030.9,474.4 1033.0,474.8 C1035.1,475.2 1037.4,475.3 1039.5,475.0 C1041.6,474.8 1044.0,473.9 1046.0,473.3 C1048.1,472.7 1050.5,472.0 1052.6,471.6 C1054.7,471.1 1057.0,471.0 1059.1,470.5 C1061.2,469.9 1063.6,469.5 1065.7,468.3 C1067.8,467.1 1070.1,464.2 1072.2,462.8 C1074.3,461.4 1076.7,460.5 1078.7,459.6 C1080.8,458.6 1083.2,458.0 1085.3,456.7 C1087.4,455.5 1089.7,453.9 1091.8,451.9 C1093.9,449.9 1096.4,446.2 1098.4,444.3 C1100.3,442.4 1102.1,440.7 1103.8,439.9 C1105.6,439.1 1107.3,439.3 1109.3,439.3 C1111.2,439.3 1113.4,440.0 1115.8,439.9 C1118.2,439.9 1122.1,439.9 1124.5,438.9 C1127.0,437.8 1129.0,435.1 1131.1,433.4 C1133.2,431.7 1135.5,429.2 1137.6,428.0 C1139.7,426.7 1141.7,426.2 1144.1,425.8 C1146.6,425.4 1150.1,425.2 1152.9,425.3 C1155.7,425.5 1158.8,426.5 1161.6,426.9 C1164.4,427.2 1167.9,427.9 1170.3,427.5 C1172.7,427.2 1174.7,425.7 1176.8,424.7 C1178.9,423.7 1181.5,422.4 1183.4,421.4 C1185.3,420.5 1187.1,419.1 1188.8,418.8 C1190.6,418.5 1192.0,419.3 1194.3,419.7 C1196.5,420.1 1200.2,421.0 1203.0,421.4 C1205.8,421.9 1208.9,422.6 1211.7,422.5 C1214.5,422.4 1218.0,421.3 1220.4,421.0 C1222.9,420.6 1224.9,420.3 1227.0,420.3 C1229.1,420.4 1231.1,420.9 1233.5,421.4 C1236.0,421.9 1239.4,423.0 1242.2,423.6 C1245.0,424.2 1248.2,425.1 1251.0,425.3 C1253.7,425.6 1257.2,424.7 1259.7,425.3 C1262.1,425.9 1264.5,427.1 1266.2,429.0 C1268.0,431.0 1269.2,434.5 1270.6,437.8 C1272.0,441.1 1273.5,446.1 1274.9,449.8 C1276.3,453.4 1277.9,457.5 1279.3,460.7 C1280.7,463.8 1282.3,466.6 1283.7,469.4 C1285.0,472.2 1286.6,474.6 1288.0,478.1 C1289.4,481.6 1291.0,486.6 1292.4,491.2 C1293.8,495.7 1295.7,503.7 1296.7,506.4 C1297.8,509.2 1297.5,505.5 1298.9,508.2 C1300.2,510.9 1303.3,518.9 1305.4,523.5 C1307.5,528.0 1309.8,532.4 1311.9,536.6 C1314.0,540.7 1316.0,545.1 1318.5,549.6 C1320.9,554.2 1324.4,560.4 1327.2,564.9 C1330.0,569.4 1333.1,573.8 1335.9,578.0 C1338.7,582.2 1341.8,587.2 1344.6,591.0 C1347.4,594.9 1350.6,598.6 1353.4,601.9 C1356.1,605.3 1359.3,608.6 1362.1,611.8 C1364.9,614.9 1368.0,619.3 1370.8,621.6 C1373.6,623.8 1376.7,624.5 1379.5,625.9 C1382.3,627.3 1385.4,629.0 1388.2,630.3 C1391.0,631.6 1394.7,633.3 1396.9,634.2 C1399.2,635.1 1400.7,635.8 1402.4,635.7 C1404.1,635.6 1405.6,634.8 1407.8,633.6 C1410.1,632.3 1413.8,629.9 1416.6,628.1 C1419.4,626.4 1422.8,624.6 1425.3,622.7 C1427.7,620.7 1429.7,617.9 1431.8,616.1 C1433.9,614.4 1436.3,613.2 1438.4,611.8 C1440.5,610.4 1442.8,609.1 1444.9,607.4 C1447.0,605.7 1449.4,603.1 1451.4,600.9 C1453.5,598.6 1455.9,596.2 1458.0,593.2 C1460.1,590.3 1462.8,585.5 1464.5,582.3 C1466.3,579.2 1467.5,576.7 1468.9,573.6 C1470.3,570.5 1471.8,565.7 1473.2,562.7 C1474.6,559.7 1476.2,557.0 1477.6,555.1 C1479.0,553.2 1480.2,551.8 1482.0,550.7 C1483.7,549.7 1486.1,549.2 1488.5,548.5 C1490.9,547.8 1494.4,546.9 1497.2,546.4 C1500.0,545.8 1501.8,545.6 1505.9,545.3 C1510.1,545.0 1517.1,544.9 1523.4,544.6 C1529.7,544.4 1538.2,544.0 1545.2,543.7 C1552.2,543.5 1561.4,543.4 1567.0,543.1 C1572.6,542.8 1576.6,542.4 1580.1,542.0 C1583.5,541.7 1586.0,540.9 1588.8,540.9 C1591.6,540.9 1594.7,542.0 1597.5,542.0 C1600.3,542.0 1603.4,541.3 1606.2,540.9 C1609.0,540.6 1612.1,540.2 1614.9,539.8 C1617.7,539.5 1620.9,539.3 1623.7,538.7 C1626.4,538.2 1630.1,537.3 1632.4,536.6 C1634.6,535.9 1636.9,534.7 1637.8,534.4" fill="none" stroke="#4d84d6" stroke-width="1.15"/>
<line x1="11" x2="1733" y1="476.5" y2="476.5" stroke="#e0e0e0" stroke-width="1" stroke-dasharray="1,2"/>
<path d="M10.5,452.6 C12.3,454.0 18.2,458.6 21.8,461.3 C25.4,464.1 29.2,467.3 32.7,470.1 C36.2,472.9 40.1,476.0 43.6,478.8 C47.1,481.6 51.0,484.7 54.5,487.5 C58.0,490.3 61.9,493.6 65.4,496.2 C68.9,498.8 72.8,501.6 76.3,503.9 C79.8,506.1 83.7,508.2 87.2,510.4 C90.7,512.6 94.6,515.5 98.1,517.4 C101.6,519.3 105.5,520.9 109.0,522.4 C112.5,523.9 116.4,525.5 119.9,526.7 C123.4,528.0 127.3,529.1 130.8,530.0 C134.3,531.0 138.2,531.9 141.7,532.6 C145.2,533.3 149.1,533.9 152.6,534.4 C156.1,534.8 160.0,535.2 163.5,535.5 C167.0,535.7 170.9,535.9 174.4,536.1 C177.9,536.3 181.8,536.5 185.3,536.6 C188.8,536.6 192.7,536.6 196.2,536.6 C199.7,536.5 203.6,536.3 207.1,536.1 C210.6,535.9 214.5,535.6 218.0,535.2 C221.5,534.9 225.4,534.4 228.9,533.9 C232.4,533.5 236.3,533.0 239.8,532.6 C243.3,532.2 247.2,532.0 250.7,531.5 C254.2,531.1 258.1,530.5 261.6,530.0 C265.1,529.5 269.0,529.0 272.5,528.5 C276.0,528.0 279.9,527.4 283.4,527.0 C286.9,526.5 288.6,526.3 294.3,525.7 C300.0,525.0 312.1,523.9 319.1,523.1 C326.1,522.3 332.0,521.5 338.1,520.8 C344.2,520.1 351.1,519.6 357.2,518.9 C363.3,518.2 370.9,517.0 376.3,516.2 C381.7,515.4 386.8,514.7 390.9,513.7 C395.0,512.7 398.3,511.2 401.8,510.0 C405.3,508.7 409.2,507.1 412.7,505.6 C416.2,504.1 420.1,502.3 423.6,500.6 C427.1,498.9 431.0,497.1 434.5,495.1 C438.0,493.1 441.9,490.6 445.4,488.2 C448.9,485.7 452.8,482.6 456.3,479.9 C459.8,477.2 463.7,473.9 467.2,471.2 C470.7,468.4 474.6,465.2 478.1,462.4 C481.6,459.6 484.9,456.7 489.0,453.7 C493.1,450.7 498.5,447.9 503.6,443.9 C508.8,439.9 515.5,433.7 521.1,428.6 C526.6,423.6 532.9,417.7 538.5,412.3 C544.1,406.9 550.4,400.6 555.9,394.8 C561.5,389.1 567.8,382.2 573.4,376.3 C579.0,370.4 585.2,363.7 590.8,357.8 C596.4,351.8 602.7,345.2 608.3,339.2 C613.8,333.3 620.1,326.5 625.7,320.7 C631.3,315.0 639.1,307.6 643.1,303.3 C647.2,298.9 648.4,296.2 651.1,293.4 C653.7,290.7 657.0,288.3 659.8,285.8 C662.6,283.4 665.7,280.6 668.5,278.2 C671.3,275.7 674.4,273.0 677.2,270.6 C680.0,268.1 683.1,265.3 685.9,262.9 C688.7,260.6 691.9,258.2 694.7,256.0 C697.4,253.7 700.6,251.0 703.4,248.8 C706.2,246.6 709.3,244.5 712.1,242.2 C714.9,240.0 718.0,236.9 720.8,234.6 C723.6,232.3 726.7,230.1 729.5,228.0 C732.3,226.0 735.5,223.6 738.3,221.5 C741.0,219.4 744.2,216.9 747.0,215.0 C749.8,213.1 752.9,211.2 755.7,209.5 C758.5,207.8 761.6,206.1 764.4,204.5 C767.2,202.9 770.3,201.2 773.1,199.7 C775.9,198.2 779.1,196.7 781.9,195.4 C784.6,194.0 787.8,192.6 790.6,191.4 C793.4,190.3 797.8,188.4 799.3,188.2 C800.8,187.9 798.5,190.3 800.0,189.9 C801.5,189.5 805.9,186.8 808.7,185.5 C811.5,184.3 814.6,183.2 817.4,182.3 C820.2,181.3 823.4,180.4 826.2,179.7 C828.9,178.9 832.1,178.1 834.9,177.5 C837.7,176.8 840.5,176.3 843.6,175.7 C846.7,175.2 851.0,174.5 854.5,174.0 C858.0,173.5 861.9,173.0 865.4,172.7 C868.9,172.3 872.8,172.0 876.3,171.8 C879.8,171.6 883.7,171.4 887.2,171.4 C890.7,171.3 894.6,171.2 898.1,171.4 C901.6,171.5 905.5,171.9 909.0,172.5 C912.5,173.0 916.4,173.8 919.9,174.6 C923.4,175.5 927.3,176.8 930.8,177.9 C934.3,179.1 938.2,180.5 941.7,181.8 C945.2,183.2 949.1,184.7 952.6,186.2 C956.1,187.7 960.0,189.4 963.5,191.0 C967.0,192.6 970.9,194.6 974.4,196.4 C977.9,198.3 981.8,200.6 985.3,202.5 C988.8,204.5 992.7,206.9 996.2,208.9 C999.7,210.9 1003.6,213.0 1007.1,215.0 C1010.6,216.9 1014.5,219.2 1018.0,221.1 C1021.5,222.9 1025.4,224.7 1028.9,226.5 C1032.4,228.3 1036.3,230.6 1039.8,232.4 C1043.3,234.2 1047.2,236.1 1050.7,237.9 C1054.2,239.6 1058.1,241.5 1061.6,243.3 C1065.1,245.2 1069.0,247.5 1072.5,249.4 C1076.0,251.3 1079.9,253.4 1083.4,255.3 C1086.9,257.2 1090.8,259.3 1094.3,261.2 C1097.8,263.1 1101.7,265.3 1105.2,267.3 C1108.7,269.3 1112.6,271.7 1116.1,273.8 C1119.6,275.9 1123.5,278.3 1127.0,280.4 C1130.5,282.5 1134.4,284.8 1137.9,286.9 C1141.4,289.0 1144.9,290.9 1148.8,293.4 C1152.6,296.0 1158.4,300.6 1161.9,302.8 C1165.3,305.1 1167.8,306.1 1170.6,307.6 C1173.4,309.2 1171.9,309.1 1179.3,312.6 C1186.7,316.2 1209.3,326.2 1217.1,330.0 C1224.8,333.8 1224.5,334.4 1228.0,336.5 C1231.4,338.7 1235.4,341.2 1238.9,343.5 C1242.3,345.8 1246.3,348.3 1249.8,350.7 C1253.2,353.1 1257.2,355.9 1260.7,358.3 C1264.1,360.8 1268.1,363.5 1271.6,366.0 C1275.0,368.4 1279.0,371.0 1282.5,373.6 C1285.9,376.2 1289.9,379.6 1293.4,382.3 C1296.8,385.0 1300.8,388.0 1304.3,390.6 C1307.7,393.2 1311.7,396.0 1315.1,398.7 C1318.6,401.4 1322.6,404.6 1326.0,407.4 C1329.5,410.2 1333.5,413.3 1336.9,416.1 C1340.4,418.9 1344.4,422.1 1347.8,424.8 C1351.3,427.5 1355.3,430.3 1358.7,432.9 C1362.2,435.5 1366.2,438.5 1369.6,441.2 C1373.1,443.8 1377.1,446.9 1380.5,449.5 C1384.0,452.0 1388.0,454.5 1391.4,456.9 C1394.9,459.2 1398.9,461.8 1402.3,464.1 C1405.8,466.4 1409.8,469.1 1413.2,471.3 C1416.7,473.5 1420.7,475.8 1424.1,477.8 C1427.6,479.8 1431.6,481.8 1435.0,483.7 C1438.5,485.6 1442.5,487.8 1445.9,489.6 C1449.4,491.4 1453.4,493.3 1456.8,495.0 C1460.3,496.7 1464.3,498.5 1467.7,500.0 C1471.2,501.6 1475.1,503.4 1478.6,504.8 C1482.1,506.3 1486.3,507.8 1489.5,509.2 C1492.8,510.5 1496.5,512.1 1499.0,513.2 C1501.6,514.2 1503.5,515.1 1505.6,515.9 C1507.7,516.8 1510.1,517.7 1512.2,518.4 C1514.3,519.1 1516.6,519.7 1518.7,520.4 C1520.8,521.0 1523.2,521.8 1525.3,522.5 C1527.4,523.2 1529.7,524.3 1531.8,525.0 C1533.9,525.7 1536.3,526.3 1538.4,526.9 C1540.5,527.6 1542.9,528.4 1545.0,529.1 C1547.1,529.8 1549.4,530.5 1551.5,531.2 C1553.6,531.9 1556.0,532.6 1558.1,533.2 C1560.2,533.7 1562.6,534.3 1564.7,534.8 C1566.8,535.3 1569.1,535.7 1571.2,536.1 C1573.3,536.5 1575.7,537.0 1577.8,537.3 C1579.9,537.6 1582.2,537.8 1584.3,538.1 C1586.4,538.4 1588.8,538.7 1590.9,538.9 C1593.0,539.1 1595.4,539.2 1597.5,539.4 C1599.6,539.6 1601.9,539.8 1604.0,539.9 C1606.1,540.0 1608.5,540.1 1610.6,540.2 C1612.7,540.3 1615.0,540.3 1617.1,540.4 C1619.2,540.4 1621.6,540.5 1623.7,540.6 C1625.8,540.6 1627.9,540.7 1630.3,540.7 C1632.6,540.8 1637.1,540.9 1638.5,540.9" fill="none" stroke="#8fd893" stroke-width="2.0" stroke-linecap="round"/>
<path d="M10.6,569.3 C11.7,570.2 15.1,573.4 17.6,574.8 C20.1,576.2 23.6,577.3 26.4,578.1 C29.2,579.0 32.4,579.7 35.2,580.3 C38.0,581.0 40.8,581.7 44.0,582.1 C47.2,582.5 51.5,582.9 55.0,583.0 C58.5,583.0 62.5,583.0 66.0,582.5 C69.5,582.1 73.5,581.2 77.0,580.3 C80.5,579.5 84.5,578.2 88.0,577.0 C91.5,575.9 95.4,574.5 99.0,573.3 C102.5,572.1 106.4,570.7 110.0,569.3 C113.5,567.9 117.8,566.3 121.0,564.5 C124.1,562.7 127.3,560.4 129.8,558.3 C132.2,556.3 134.2,554.2 136.4,551.7 C138.5,549.3 140.8,546.1 143.0,543.0 C145.1,539.8 147.1,536.2 149.5,532.0 C152.0,527.7 155.5,521.5 158.3,516.6 C161.2,511.6 164.3,505.9 167.1,501.2 C170.0,496.4 173.1,491.1 175.9,486.9 C178.8,482.6 181.9,478.6 184.7,474.8 C187.6,470.9 190.7,466.2 193.5,462.7 C196.3,459.2 199.5,455.8 202.3,452.8 C205.1,449.8 208.3,446.8 211.1,444.0 C213.9,441.2 217.1,437.7 219.9,435.2 C222.7,432.7 225.9,430.2 228.7,428.2 C231.5,426.1 234.7,423.9 237.5,422.4 C240.3,420.9 243.5,419.7 246.3,418.7 C249.1,417.6 252.3,416.5 255.1,415.8 C257.9,415.1 261.1,415.1 263.9,414.3 C266.7,413.5 269.9,411.4 272.7,410.6 C275.5,409.7 278.7,409.3 281.5,409.2 C284.3,409.2 287.2,409.6 290.0,410.1 C292.8,410.6 295.9,411.2 298.7,412.3 C301.5,413.3 304.6,415.1 307.4,416.6 C310.2,418.2 313.4,420.3 316.2,422.1 C318.9,423.8 322.1,425.8 324.9,427.5 C327.7,429.3 330.8,431.2 333.6,433.0 C336.4,434.7 339.5,436.9 342.3,438.4 C345.1,440.0 348.2,441.6 351.0,442.8 C353.8,443.9 357.0,444.7 359.8,445.6 C362.5,446.5 365.7,447.6 368.5,448.2 C371.3,448.8 374.4,449.2 377.2,449.3 C380.0,449.4 383.1,449.1 385.9,448.7 C388.7,448.2 391.8,447.4 394.6,446.5 C397.4,445.5 400.6,444.4 403.4,442.8 C406.1,441.1 409.3,438.9 412.1,436.2 C414.9,433.6 418.0,430.4 420.8,426.4 C423.6,422.4 426.7,416.4 429.5,411.2 C432.3,405.9 435.4,399.3 438.2,393.7 C441.0,388.2 444.2,381.9 446.9,376.3 C449.7,370.7 452.9,364.4 455.7,358.9 C458.5,353.3 461.6,346.6 464.4,341.4 C467.2,336.2 470.3,330.7 473.1,326.2 C475.9,321.6 479.4,316.6 481.8,313.1 C484.3,309.6 485.4,307.9 488.4,304.4 C491.4,300.9 497.3,294.8 500.7,291.3 C504.0,287.8 506.6,285.7 509.4,282.5 C512.2,279.4 515.7,274.8 518.1,271.6 C520.5,268.5 522.5,266.4 524.6,262.9 C526.7,259.4 529.1,254.0 531.2,249.8 C533.3,245.7 535.6,241.0 537.7,236.8 C539.8,232.6 542.2,227.5 544.3,223.7 C546.3,219.9 548.7,216.1 550.8,212.8 C552.9,209.5 555.2,205.8 557.3,203.0 C559.4,200.2 561.8,197.4 563.9,195.4 C566.0,193.3 568.3,191.6 570.4,189.9 C572.5,188.2 574.9,186.2 576.9,184.5 C579.0,182.7 581.4,180.9 583.5,179.0 C585.6,177.1 587.9,174.4 590.0,172.5 C592.1,170.5 594.5,168.6 596.6,167.0 C598.7,165.4 601.0,163.9 603.1,162.7 C605.2,161.4 607.6,160.2 609.6,159.4 C611.7,158.6 613.7,158.2 616.2,157.9 C618.6,157.5 622.1,157.3 624.9,157.2 C627.7,157.1 630.8,157.1 633.6,157.2 C636.4,157.3 639.6,157.5 642.3,157.9 C645.1,158.2 648.3,158.8 651.1,159.4 C653.9,160.0 657.0,161.0 659.8,161.6 C662.6,162.2 665.7,162.7 668.5,163.1 C671.3,163.4 674.4,163.6 677.2,163.7 C680.0,163.9 683.1,164.0 685.9,164.2 C688.7,164.4 691.9,164.5 694.7,164.8 C697.4,165.2 700.6,165.9 703.4,166.6 C706.2,167.3 709.3,167.9 712.1,169.2 C714.9,170.5 718.0,172.6 720.8,174.6 C723.6,176.7 726.7,179.7 729.5,182.3 C732.3,184.9 735.5,188.2 738.3,191.0 C741.0,193.8 744.2,197.3 747.0,199.7 C749.8,202.2 752.9,204.9 755.7,206.3 C758.5,207.6 761.6,207.8 764.4,208.0 C767.2,208.2 770.3,207.5 773.1,207.3 C775.9,207.1 779.1,206.5 781.9,206.7 C784.6,206.9 787.8,207.5 790.6,208.4 C793.4,209.4 797.8,212.1 799.3,212.8 C800.8,213.5 798.5,211.7 800.0,212.8 C801.5,213.8 805.9,217.1 808.7,219.3 C811.5,221.6 814.6,224.5 817.4,227.0 C820.2,229.4 823.4,232.1 826.2,234.6 C828.9,237.0 832.1,239.8 834.9,242.2 C837.7,244.7 840.8,247.8 843.6,249.8 C846.4,251.9 849.5,253.9 852.3,255.3 C855.1,256.7 858.2,257.9 861.0,258.6 C863.8,259.3 867.0,259.0 869.8,259.7 C872.5,260.4 875.7,261.9 878.5,262.9 C881.3,264.0 884.4,264.0 887.2,266.2 C890.0,268.4 893.1,273.3 895.9,276.7 C898.7,280.1 901.8,284.4 904.6,287.6 C907.4,290.7 910.6,293.3 913.4,296.3 C916.1,299.3 919.3,303.0 922.1,306.1 C924.9,309.2 928.0,312.6 930.8,315.9 C933.6,319.2 936.7,323.1 939.5,326.8 C942.3,330.5 945.4,335.3 948.2,338.8 C951.0,342.3 954.2,345.3 956.9,348.6 C959.7,351.9 962.9,356.0 965.7,359.5 C968.5,363.0 971.6,367.1 974.4,370.4 C977.2,373.7 980.3,377.1 983.1,380.2 C985.9,383.4 989.0,387.1 991.8,390.0 C994.6,393.0 997.8,396.3 1000.5,398.7 C1003.3,401.2 1006.5,403.3 1009.3,405.3 C1012.1,407.3 1015.2,409.8 1018.0,411.4 C1020.8,413.0 1023.9,414.2 1026.7,415.1 C1029.5,416.0 1032.6,416.9 1035.4,417.3 C1038.2,417.6 1041.4,417.6 1044.1,417.3 C1046.9,416.9 1050.1,415.9 1052.9,415.1 C1055.7,414.3 1058.4,413.1 1061.6,412.3 C1064.7,411.4 1069.0,410.2 1072.5,409.6 C1076.0,409.1 1079.9,408.9 1083.4,408.6 C1086.9,408.2 1090.8,408.0 1094.3,407.5 C1097.8,406.9 1101.7,405.9 1105.2,405.3 C1108.7,404.7 1112.6,404.1 1116.1,403.5 C1119.6,403.0 1123.5,402.5 1127.0,402.0 C1130.5,401.5 1134.4,401.2 1137.9,400.5 C1141.4,399.8 1145.3,398.6 1148.8,397.7 C1152.3,396.7 1156.2,395.6 1159.7,394.4 C1163.2,393.2 1167.3,391.6 1170.6,390.0 C1173.8,388.4 1177.1,385.8 1180.0,384.5 C1182.9,383.2 1185.9,382.9 1188.7,381.9 C1191.5,380.8 1194.6,379.5 1197.4,378.0 C1200.2,376.5 1203.4,374.1 1206.2,372.5 C1208.9,370.9 1212.1,369.2 1214.9,368.1 C1217.7,367.1 1220.8,366.4 1223.6,366.0 C1226.4,365.5 1229.5,365.2 1232.3,365.3 C1235.1,365.4 1238.2,366.0 1241.0,366.6 C1243.8,367.2 1247.0,368.3 1249.8,369.2 C1252.5,370.2 1255.7,371.5 1258.5,372.5 C1261.3,373.6 1264.8,374.6 1267.2,375.8 C1269.6,377.0 1271.6,378.2 1273.7,380.1 C1275.8,382.1 1278.2,385.0 1280.3,387.8 C1282.4,390.6 1284.7,394.3 1286.8,397.6 C1288.9,400.9 1291.3,404.6 1293.4,408.5 C1295.4,412.3 1297.8,417.4 1299.9,421.6 C1302.0,425.7 1304.3,430.4 1306.4,434.6 C1308.5,438.8 1310.9,443.5 1313.0,447.7 C1315.1,451.9 1317.4,456.8 1319.5,460.8 C1321.6,464.8 1324.0,469.1 1326.0,472.8 C1328.1,476.4 1330.5,480.4 1332.6,483.7 C1334.7,487.0 1337.0,490.3 1339.1,493.5 C1341.2,496.6 1343.6,500.3 1345.7,503.3 C1347.8,506.3 1350.1,509.4 1352.2,512.0 C1354.3,514.6 1356.7,517.4 1358.7,519.6 C1360.8,521.9 1363.2,524.1 1365.3,526.2 C1367.4,528.3 1369.7,530.7 1371.8,532.7 C1373.9,534.7 1376.3,536.9 1378.4,538.8 C1380.5,540.7 1384.7,544.6 1384.9,544.7 C1385.1,544.9 1379.0,539.5 1379.5,539.8 C1380.0,540.2 1385.4,544.9 1388.2,547.0 C1391.0,549.1 1394.2,551.4 1396.9,552.9 C1399.7,554.4 1402.9,555.4 1405.7,556.2 C1408.5,557.0 1411.2,557.5 1414.4,557.9 C1417.5,558.3 1421.8,558.9 1425.3,558.8 C1428.8,558.7 1432.7,558.0 1436.2,557.3 C1439.7,556.5 1443.6,555.4 1447.1,554.0 C1450.6,552.6 1454.8,550.5 1458.0,548.5 C1461.1,546.6 1463.9,544.1 1466.7,542.0 C1469.5,539.9 1472.6,537.6 1475.4,535.5 C1478.2,533.4 1481.4,530.8 1484.1,528.9 C1486.9,527.0 1490.1,525.0 1492.9,523.5 C1495.7,521.9 1498.4,520.2 1501.6,519.1 C1504.7,518.0 1509.0,517.1 1512.5,516.5 C1516.0,515.9 1519.9,515.5 1523.4,515.2 C1526.9,514.8 1530.8,514.8 1534.3,514.3 C1537.8,513.8 1541.7,513.3 1545.2,512.1 C1548.7,511.0 1552.6,508.7 1556.1,507.1 C1559.6,505.5 1563.5,503.7 1567.0,502.1 C1570.5,500.5 1574.4,498.8 1577.9,497.3 C1581.4,495.9 1585.3,494.5 1588.8,493.0 C1592.3,491.4 1596.2,489.1 1599.7,487.5 C1603.2,485.9 1607.1,484.4 1610.6,483.1 C1614.1,481.9 1617.5,481.1 1621.5,479.9 C1625.4,478.7 1632.5,476.5 1635.2,475.8 C1637.9,475.1 1637.9,475.5 1638.5,475.4" fill="none" stroke="#5c9df2" stroke-width="2.1" stroke-linecap="round"/>
<path d="M13.5,561.0 V577.0 M22.5,558.0 V573.0 M34.5,568.0 V575.0 M39.5,570.0 V574.0 M43.5,566.0 V573.0 M56.5,547.0 V579.0 M60.5,539.0 V552.0 M69.5,540.0 V552.0 M73.5,539.0 V547.0 M82.5,541.0 V551.0 M94.5,534.0 V546.0 M99.5,537.0 V542.0 M111.5,540.0 V546.0 M124.5,488.0 V545.0 M129.5,470.0 V493.0 M133.5,439.0 V476.0 M146.5,421.0 V453.0 M167.5,441.0 V476.0 M171.5,446.0 V473.0 M180.5,437.0 V457.0 M184.5,426.0 V447.0 M193.5,442.0 V450.0 M197.5,444.0 V455.0 M201.5,438.0 V449.0 M206.5,424.0 V449.0 M210.5,426.0 V436.0 M227.5,445.0 V455.0 M231.5,437.0 V455.0 M240.5,429.0 V440.0 M248.5,448.0 V468.0 M253.5,446.0 V457.0 M257.5,446.0 V453.0 M261.5,427.0 V455.0 M265.5,409.0 V432.0 M287.5,444.0 V453.0 M300.5,446.0 V457.0 M321.5,460.0 V493.0 M325.5,454.0 V468.0 M338.5,459.0 V468.0 M342.5,459.0 V464.0 M347.5,449.0 V463.0 M359.5,437.0 V469.0 M364.5,434.0 V446.0 M372.5,444.0 V454.0 M377.5,438.0 V452.0 M385.5,435.0 V449.0 M389.5,413.0 V437.0 M394.5,387.0 V419.0 M398.5,381.0 V397.0 M406.5,384.0 V395.0 M411.5,376.0 V392.0 M415.5,366.0 V395.0 M419.5,332.0 V370.0 M424.5,319.0 V345.0 M428.5,300.0 V328.0 M432.5,307.0 V322.0 M436.5,278.0 V309.0 M441.5,274.0 V297.0 M454.5,285.0 V320.0 M458.5,287.0 V310.0 M462.5,282.0 V294.0 M466.5,270.0 V291.0 M479.5,277.0 V292.0 M496.5,318.0 V340.0 M501.5,289.0 V323.0 M509.5,294.0 V309.0 M513.5,265.0 V306.0 M518.5,247.0 V271.0 M522.5,213.0 V255.0 M535.5,171.0 V227.0 M539.5,152.0 V181.0 M556.5,180.0 V203.0 M569.5,206.0 V247.0 M578.5,139.0 V228.0 M586.5,130.0 V162.0 M595.5,174.0 V214.0 M603.5,172.0 V198.0 M612.5,201.0 V220.0 M616.5,190.0 V207.0 M625.5,207.0 V220.0 M629.5,191.0 V218.0 M637.5,191.0 V222.0 M646.5,211.0 V219.0 M650.5,205.0 V218.0 M655.5,205.0 V218.0 M659.5,196.0 V216.0 M663.5,192.0 V211.0 M667.5,157.0 V196.0 M689.5,177.0 V201.0 M702.5,188.0 V195.0 M727.5,245.0 V273.0 M736.5,236.0 V260.0 M740.5,224.0 V244.0 M749.5,207.0 V238.0 M753.5,187.0 V213.0 M757.5,177.0 V198.0 M766.5,175.0 V192.0 M770.5,159.0 V190.0 M779.5,182.0 V198.0 M796.5,229.0 V297.0 M800.5,217.0 V250.0 M821.5,265.0 V279.0 M826.5,252.0 V276.0 M843.5,264.0 V282.0 M847.5,253.0 V276.0 M851.5,259.0 V267.0 M855.5,232.0 V267.0 M877.5,270.0 V283.0 M881.5,268.0 V277.0 M885.5,268.0 V274.0 M898.5,324.0 V365.0 M907.5,325.0 V361.0 M915.5,305.0 V339.0 M941.5,358.0 V374.0 M954.5,364.0 V394.0 M971.5,412.0 V425.0 M975.5,405.0 V417.0 M979.5,388.0 V417.0 M984.5,388.0 V405.0 M988.5,381.0 V400.0 M997.5,374.0 V387.0 M1014.5,382.0 V415.0 M1018.5,358.0 V391.0 M1031.5,379.0 V386.0 M1035.5,367.0 V398.0 M1039.5,363.0 V381.0 M1044.5,333.0 V375.0 M1048.5,328.0 V349.0 M1086.5,385.0 V412.0 M1095.5,385.0 V393.0 M1099.5,376.0 V391.0 M1116.5,388.0 V400.0 M1121.5,392.0 V397.0 M1125.5,392.0 V395.0 M1142.5,385.0 V391.0 M1146.5,367.0 V388.0 M1151.5,368.0 V376.0 M1155.5,364.0 V371.0 M1159.5,352.0 V368.0 M1163.5,346.0 V360.0 M1185.5,367.0 V376.0 M1193.5,338.0 V375.0 M1198.5,333.0 V349.0 M1210.5,343.0 V350.0 M1227.5,377.0 V404.0 M1236.5,384.0 V400.0 M1249.5,393.0 V411.0 M1253.5,382.0 V400.0 M1279.5,466.0 V497.0 M1296.5,504.0 V548.0 M1300.5,500.0 V516.0 M1304.5,498.0 V509.0 M1309.5,498.0 V516.0 M1322.5,519.0 V531.0 M1326.5,508.0 V527.0 M1330.5,504.0 V512.0 M1339.5,515.0 V524.0 M1343.5,515.0 V522.0 M1356.5,520.0 V527.0 M1360.5,520.0 V524.0 M1377.5,498.0 V538.0 M1390.5,520.0 V538.0 M1399.5,506.0 V527.0 M1407.5,492.0 V524.0 M1428.5,511.0 V527.0 M1433.5,506.0 V520.0 M1437.5,505.0 V515.0 M1441.5,504.0 V513.0 M1446.5,491.0 V509.0 M1450.5,503.0 V508.0 M1454.5,492.0 V505.0 M1458.5,467.0 V496.0 M1488.5,495.0 V515.0 M1493.5,496.0 V503.0 M1497.5,492.0 V499.0 M1510.5,514.0 V521.0 M1518.5,507.0 V521.0 M1523.5,501.0 V515.0 M1527.5,496.0 V505.0 M1540.5,508.0 V513.0 M1544.5,502.0 V514.0 M1552.5,483.0 V510.0 M1561.5,486.0 V495.0 M1565.5,485.0 V492.0 M1570.5,475.0 V492.0 M1578.5,465.0 V495.0 M1587.5,467.0 V477.0 M1595.5,458.0 V476.0 M1608.5,472.0 V484.0 M1612.5,473.0 V480.0 M1617.5,462.0 V477.0 M1629.5,475.0 V478.0 M1634.5,468.0 V477.0" stroke="#52dd5c" stroke-width="1" fill="none"/>
<path d="M17.5,564.0 V575.0 M26.5,562.0 V574.0 M30.5,568.0 V577.0 M47.5,568.0 V574.0 M52.5,563.0 V575.0 M64.5,544.0 V553.0 M77.5,537.0 V545.0 M86.5,538.0 V547.0 M90.5,542.0 V552.0 M103.5,537.0 V543.0 M107.5,537.0 V545.0 M116.5,541.0 V550.0 M120.5,541.0 V546.0 M137.5,438.0 V460.0 M141.5,436.0 V464.0 M150.5,424.0 V446.0 M154.5,433.0 V455.0 M158.5,433.0 V448.0 M163.5,446.0 V459.0 M176.5,441.0 V460.0 M188.5,421.0 V452.0 M214.5,414.0 V437.0 M218.5,433.0 V451.0 M223.5,444.0 V455.0 M235.5,432.0 V442.0 M244.5,434.0 V466.0 M270.5,402.0 V420.0 M274.5,414.0 V434.0 M278.5,433.0 V460.0 M282.5,441.0 V454.0 M291.5,429.0 V450.0 M295.5,440.0 V457.0 M304.5,446.0 V453.0 M308.5,443.0 V470.0 M312.5,463.0 V489.0 M317.5,477.0 V503.0 M330.5,456.0 V467.0 M334.5,449.0 V465.0 M351.5,449.0 V462.0 M355.5,452.0 V467.0 M368.5,438.0 V450.0 M381.5,440.0 V451.0 M402.5,388.0 V399.0 M445.5,286.0 V298.0 M449.5,287.0 V316.0 M471.5,263.0 V288.0 M475.5,270.0 V291.0 M483.5,272.0 V298.0 M488.5,291.0 V329.0 M492.5,316.0 V338.0 M505.5,290.0 V315.0 M526.5,211.0 V233.0 M530.5,207.0 V232.0 M543.5,152.0 V195.0 M548.5,167.0 V206.0 M552.5,191.0 V206.0 M560.5,192.0 V225.0 M565.5,208.0 V246.0 M573.5,210.0 V228.0 M582.5,145.0 V168.0 M590.5,150.0 V211.0 M599.5,168.0 V192.0 M607.5,187.0 V220.0 M620.5,195.0 V226.0 M633.5,192.0 V219.0 M642.5,212.0 V224.0 M672.5,154.0 V176.0 M676.5,164.0 V179.0 M680.5,167.0 V194.0 M684.5,184.0 V199.0 M693.5,171.0 V183.0 M697.5,175.0 V198.0 M706.5,191.0 V198.0 M710.5,195.0 V249.0 M714.5,226.0 V240.0 M719.5,228.0 V243.0 M723.5,233.0 V277.0 M731.5,250.0 V259.0 M744.5,223.0 V242.0 M761.5,187.0 V196.0 M774.5,156.0 V198.0 M783.5,184.0 V219.0 M787.5,203.0 V335.0 M791.5,272.0 V301.0 M804.5,222.0 V269.0 M808.5,227.0 V265.0 M813.5,244.0 V278.0 M817.5,259.0 V297.0 M830.5,244.0 V266.0 M834.5,242.0 V274.0 M838.5,270.0 V294.0 M860.5,222.0 V242.0 M864.5,232.0 V264.0 M868.5,256.0 V276.0 M873.5,263.0 V297.0 M890.5,266.0 V313.0 M894.5,302.0 V379.0 M903.5,329.0 V353.0 M911.5,322.0 V336.0 M920.5,300.0 V319.0 M924.5,301.0 V333.0 M928.5,310.0 V338.0 M932.5,313.0 V366.0 M937.5,353.0 V377.0 M945.5,354.0 V375.0 M950.5,357.0 V392.0 M958.5,369.0 V402.0 M962.5,378.0 V414.0 M967.5,403.0 V437.0 M992.5,377.0 V387.0 M1001.5,380.0 V391.0 M1005.5,379.0 V390.0 M1009.5,387.0 V423.0 M1022.5,355.0 V378.0 M1027.5,361.0 V389.0 M1052.5,343.0 V366.0 M1056.5,352.0 V381.0 M1061.5,368.0 V377.0 M1065.5,369.0 V381.0 M1069.5,365.0 V400.0 M1074.5,389.0 V403.0 M1078.5,383.0 V414.0 M1082.5,389.0 V416.0 M1091.5,387.0 V391.0 M1103.5,382.0 V399.0 M1108.5,389.0 V401.0 M1112.5,390.0 V401.0 M1129.5,379.0 V398.0 M1133.5,386.0 V396.0 M1138.5,383.0 V392.0 M1168.5,348.0 V370.0 M1172.5,362.0 V377.0 M1176.5,368.0 V379.0 M1180.5,374.0 V376.0 M1189.5,364.0 V378.0 M1202.5,336.0 V351.0 M1206.5,343.0 V351.0 M1215.5,338.0 V351.0 M1219.5,349.0 V365.0 M1223.5,361.0 V399.0 M1232.5,381.0 V399.0 M1240.5,390.0 V394.0 M1245.5,392.0 V414.0 M1257.5,380.0 V388.0 M1262.5,384.0 V419.0 M1266.5,408.0 V434.0 M1270.5,424.0 V485.0 M1275.5,455.0 V489.0 M1283.5,471.0 V503.0 M1287.5,485.0 V508.0 M1292.5,497.0 V543.0 M1313.5,501.0 V519.0 M1317.5,514.0 V531.0 M1334.5,503.0 V526.0 M1347.5,513.0 V528.0 M1351.5,519.0 V529.0 M1364.5,520.0 V525.0 M1369.5,522.0 V539.0 M1373.5,535.0 V544.0 M1381.5,507.0 V520.0 M1386.5,509.0 V533.0 M1394.5,510.0 V529.0 M1403.5,512.0 V526.0 M1411.5,496.0 V510.0 M1416.5,505.0 V524.0 M1420.5,519.0 V525.0 M1424.5,520.0 V529.0 M1463.5,468.0 V479.0 M1467.5,472.0 V498.0 M1471.5,487.0 V504.0 M1475.5,492.0 V502.0 M1480.5,496.0 V509.0 M1484.5,502.0 V514.0 M1501.5,495.0 V513.0 M1505.5,508.0 V523.0 M1514.5,515.0 V526.0 M1531.5,497.0 V513.0 M1535.5,508.0 V513.0 M1548.5,496.0 V506.0 M1557.5,483.0 V495.0 M1574.5,478.0 V496.0 M1582.5,463.0 V477.0 M1591.5,469.0 V480.0 M1599.5,462.0 V473.0 M1604.5,471.0 V485.0 M1621.5,468.0 V479.0 M1625.5,473.0 V478.0 M1638.5,466.0 V477.0" stroke="#ffffff" stroke-width="1" fill="none"/>
<path d="M12.0,564.0h3v12.0h-3z M21.0,566.0h3v6.0h-3z M33.0,570.0h3v3.0h-3z M38.0,571.0h3v2.0h-3z M42.0,568.0h3v4.0h-3z M55.0,550.0h3v24.0h-3z M59.0,544.0h3v7.0h-3z M68.0,545.0h3v4.0h-3z M72.0,541.0h3v5.0h-3z M81.0,543.0h3v2.0h-3z M93.0,539.0h3v6.0h-3z M98.0,539.0h3v1.0h-3z M110.0,541.0h3v3.0h-3z M123.0,491.0h3v53.0h-3z M128.0,473.0h3v19.0h-3z M132.0,441.0h3v33.0h-3z M145.0,429.0h3v22.0h-3z M166.0,452.0h3v3.0h-3z M170.0,448.0h3v5.0h-3z M179.0,445.0h3v5.0h-3z M183.0,431.0h3v15.0h-3z M192.0,447.0h3v2.0h-3z M196.0,445.0h3v4.0h-3z M200.0,444.0h3v2.0h-3z M205.0,431.0h3v13.0h-3z M209.0,427.0h3v6.0h-3z M226.0,446.0h3v3.0h-3z M230.0,438.0h3v10.0h-3z M239.0,438.0h3v1.0h-3z M247.0,455.0h3v9.0h-3z M252.0,451.0h3v4.0h-3z M256.0,449.0h3v3.0h-3z M260.0,427.0h3v24.0h-3z M264.0,410.0h3v19.0h-3z M286.0,445.0h3v4.0h-3z M299.0,447.0h3v3.0h-3z M320.0,461.0h3v28.0h-3z M324.0,460.0h3v5.0h-3z M337.0,461.0h3v2.0h-3z M341.0,460.0h3v3.0h-3z M346.0,453.0h3v9.0h-3z M358.0,443.0h3v22.0h-3z M363.0,440.0h3v4.0h-3z M371.0,449.0h3v4.0h-3z M376.0,446.0h3v5.0h-3z M384.0,436.0h3v12.0h-3z M388.0,417.0h3v19.0h-3z M393.0,393.0h3v25.0h-3z M397.0,392.0h3v1.0h-3z M405.0,390.0h3v5.0h-3z M410.0,388.0h3v1.0h-3z M414.0,368.0h3v20.0h-3z M418.0,337.0h3v32.0h-3z M423.0,324.0h3v15.0h-3z M427.0,314.0h3v13.0h-3z M431.0,308.0h3v8.0h-3z M435.0,286.0h3v23.0h-3z M440.0,286.0h3v2.0h-3z M453.0,292.0h3v14.0h-3z M457.0,290.0h3v4.0h-3z M461.0,288.0h3v4.0h-3z M465.0,272.0h3v18.0h-3z M478.0,279.0h3v5.0h-3z M495.0,321.0h3v14.0h-3z M500.0,291.0h3v30.0h-3z M508.0,297.0h3v11.0h-3z M512.0,266.0h3v39.0h-3z M517.0,254.0h3v14.0h-3z M521.0,222.0h3v32.0h-3z M534.0,178.0h3v48.0h-3z M538.0,157.0h3v22.0h-3z M555.0,193.0h3v8.0h-3z M568.0,211.0h3v35.0h-3z M577.0,146.0h3v81.0h-3z M585.0,153.0h3v1.0h-3z M594.0,177.0h3v30.0h-3z M602.0,188.0h3v1.0h-3z M611.0,206.0h3v2.0h-3z M615.0,204.0h3v3.0h-3z M624.0,212.0h3v3.0h-3z M628.0,195.0h3v18.0h-3z M636.0,215.0h3v2.0h-3z M645.0,215.0h3v3.0h-3z M649.0,214.0h3v1.0h-3z M654.0,213.0h3v2.0h-3z M658.0,210.0h3v5.0h-3z M662.0,195.0h3v15.0h-3z M666.0,162.0h3v33.0h-3z M688.0,178.0h3v12.0h-3z M701.0,191.0h3v3.0h-3z M726.0,251.0h3v21.0h-3z M735.0,237.0h3v17.0h-3z M739.0,225.0h3v13.0h-3z M748.0,210.0h3v26.0h-3z M752.0,192.0h3v19.0h-3z M756.0,188.0h3v4.0h-3z M765.0,188.0h3v3.0h-3z M769.0,165.0h3v24.0h-3z M778.0,187.0h3v9.0h-3z M795.0,235.0h3v60.0h-3z M799.0,224.0h3v11.0h-3z M820.0,271.0h3v7.0h-3z M825.0,257.0h3v14.0h-3z M842.0,265.0h3v16.0h-3z M846.0,265.0h3v9.0h-3z M850.0,260.0h3v6.0h-3z M854.0,233.0h3v30.0h-3z M876.0,276.0h3v6.0h-3z M880.0,272.0h3v4.0h-3z M884.0,269.0h3v4.0h-3z M897.0,331.0h3v19.0h-3z M906.0,330.0h3v16.0h-3z M914.0,309.0h3v27.0h-3z M940.0,364.0h3v9.0h-3z M953.0,370.0h3v16.0h-3z M970.0,415.0h3v2.0h-3z M974.0,412.0h3v3.0h-3z M978.0,392.0h3v21.0h-3z M983.0,391.0h3v2.0h-3z M987.0,382.0h3v10.0h-3z M996.0,381.0h3v4.0h-3z M1013.0,389.0h3v25.0h-3z M1017.0,362.0h3v28.0h-3z M1030.0,380.0h3v5.0h-3z M1034.0,379.0h3v3.0h-3z M1038.0,373.0h3v7.0h-3z M1043.0,344.0h3v30.0h-3z M1047.0,344.0h3v1.0h-3z M1085.0,389.0h3v21.0h-3z M1094.0,386.0h3v3.0h-3z M1098.0,385.0h3v2.0h-3z M1115.0,395.0h3v3.0h-3z M1120.0,393.0h3v2.0h-3z M1124.0,393.0h3v1.0h-3z M1141.0,386.0h3v4.0h-3z M1145.0,369.0h3v18.0h-3z M1150.0,369.0h3v1.0h-3z M1154.0,366.0h3v4.0h-3z M1158.0,356.0h3v11.0h-3z M1162.0,349.0h3v8.0h-3z M1184.0,369.0h3v6.0h-3z M1192.0,344.0h3v30.0h-3z M1197.0,338.0h3v7.0h-3z M1209.0,346.0h3v3.0h-3z M1226.0,388.0h3v7.0h-3z M1235.0,391.0h3v3.0h-3z M1248.0,396.0h3v15.0h-3z M1252.0,383.0h3v14.0h-3z M1278.0,472.0h3v12.0h-3z M1295.0,507.0h3v36.0h-3z M1299.0,505.0h3v6.0h-3z M1303.0,504.0h3v3.0h-3z M1308.0,503.0h3v2.0h-3z M1321.0,521.0h3v6.0h-3z M1325.0,509.0h3v17.0h-3z M1329.0,505.0h3v6.0h-3z M1338.0,517.0h3v6.0h-3z M1342.0,516.0h3v2.0h-3z M1355.0,521.0h3v2.0h-3z M1359.0,521.0h3v1.0h-3z M1376.0,510.0h3v27.0h-3z M1389.0,521.0h3v6.0h-3z M1398.0,514.0h3v12.0h-3z M1406.0,501.0h3v21.0h-3z M1427.0,519.0h3v7.0h-3z M1432.0,514.0h3v5.0h-3z M1436.0,510.0h3v4.0h-3z M1440.0,508.0h3v3.0h-3z M1445.0,506.0h3v2.0h-3z M1449.0,504.0h3v3.0h-3z M1453.0,493.0h3v11.0h-3z M1457.0,471.0h3v24.0h-3z M1487.0,497.0h3v15.0h-3z M1492.0,497.0h3v1.0h-3z M1496.0,496.0h3v1.0h-3z M1509.0,515.0h3v5.0h-3z M1517.0,509.0h3v11.0h-3z M1522.0,503.0h3v7.0h-3z M1526.0,498.0h3v6.0h-3z M1539.0,509.0h3v2.0h-3z M1543.0,503.0h3v7.0h-3z M1551.0,485.0h3v18.0h-3z M1560.0,491.0h3v2.0h-3z M1564.0,488.0h3v3.0h-3z M1569.0,479.0h3v10.0h-3z M1577.0,467.0h3v26.0h-3z M1586.0,469.0h3v5.0h-3z M1594.0,463.0h3v9.0h-3z M1607.0,477.0h3v6.0h-3z M1611.0,475.0h3v4.0h-3z M1616.0,469.0h3v7.0h-3z M1628.0,476.0h3v1.0h-3z M1633.0,469.0h3v7.0h-3z" fill="#41e04d"/>
<path d="M16.0,565.0h3v8.0h-3z M25.0,566.0h3v7.0h-3z M29.0,572.0h3v2.0h-3z M46.0,569.0h3v5.0h-3z M51.0,572.0h3v2.0h-3z M63.0,545.0h3v5.0h-3z M76.0,541.0h3v3.0h-3z M85.0,542.0h3v1.0h-3z M89.0,543.0h3v1.0h-3z M102.0,539.0h3v2.0h-3z M106.0,539.0h3v5.0h-3z M115.0,543.0h3v1.0h-3z M119.0,543.0h3v1.0h-3z M136.0,441.0h3v10.0h-3z M140.0,450.0h3v4.0h-3z M149.0,429.0h3v9.0h-3z M153.0,438.0h3v9.0h-3z M157.0,445.0h3v2.0h-3z M162.0,447.0h3v9.0h-3z M175.0,447.0h3v4.0h-3z M187.0,431.0h3v18.0h-3z M213.0,427.0h3v9.0h-3z M217.0,436.0h3v12.0h-3z M222.0,446.0h3v1.0h-3z M234.0,438.0h3v3.0h-3z M243.0,438.0h3v26.0h-3z M269.0,410.0h3v6.0h-3z M273.0,415.0h3v18.0h-3z M277.0,433.0h3v10.0h-3z M281.0,442.0h3v7.0h-3z M290.0,431.0h3v17.0h-3z M294.0,446.0h3v7.0h-3z M303.0,448.0h3v2.0h-3z M307.0,450.0h3v15.0h-3z M311.0,465.0h3v15.0h-3z M316.0,479.0h3v10.0h-3z M329.0,459.0h3v4.0h-3z M333.0,462.0h3v1.0h-3z M350.0,451.0h3v4.0h-3z M354.0,454.0h3v7.0h-3z M367.0,440.0h3v9.0h-3z M380.0,444.0h3v4.0h-3z M401.0,392.0h3v4.0h-3z M444.0,287.0h3v10.0h-3z M448.0,288.0h3v17.0h-3z M470.0,272.0h3v10.0h-3z M474.0,279.0h3v5.0h-3z M482.0,279.0h3v18.0h-3z M487.0,292.0h3v31.0h-3z M491.0,322.0h3v14.0h-3z M504.0,292.0h3v17.0h-3z M525.0,220.0h3v3.0h-3z M529.0,223.0h3v4.0h-3z M542.0,157.0h3v26.0h-3z M547.0,183.0h3v17.0h-3z M551.0,199.0h3v2.0h-3z M559.0,193.0h3v22.0h-3z M564.0,214.0h3v31.0h-3z M572.0,211.0h3v16.0h-3z M581.0,146.0h3v8.0h-3z M589.0,153.0h3v54.0h-3z M598.0,177.0h3v13.0h-3z M606.0,188.0h3v22.0h-3z M619.0,204.0h3v11.0h-3z M632.0,195.0h3v22.0h-3z M641.0,216.0h3v4.0h-3z M671.0,162.0h3v6.0h-3z M675.0,168.0h3v9.0h-3z M679.0,176.0h3v11.0h-3z M683.0,186.0h3v4.0h-3z M692.0,177.0h3v2.0h-3z M696.0,178.0h3v17.0h-3z M705.0,192.0h3v5.0h-3z M709.0,197.0h3v33.0h-3z M713.0,229.0h3v6.0h-3z M718.0,232.0h3v3.0h-3z M722.0,235.0h3v37.0h-3z M730.0,252.0h3v3.0h-3z M743.0,226.0h3v10.0h-3z M760.0,188.0h3v3.0h-3z M773.0,165.0h3v31.0h-3z M782.0,186.0h3v21.0h-3z M786.0,206.0h3v72.0h-3z M790.0,277.0h3v20.0h-3z M803.0,224.0h3v24.0h-3z M807.0,240.0h3v18.0h-3z M812.0,259.0h3v11.0h-3z M816.0,269.0h3v9.0h-3z M829.0,257.0h3v2.0h-3z M833.0,258.0h3v15.0h-3z M837.0,272.0h3v10.0h-3z M859.0,234.0h3v7.0h-3z M863.0,239.0h3v20.0h-3z M867.0,258.0h3v11.0h-3z M872.0,268.0h3v14.0h-3z M889.0,268.0h3v39.0h-3z M893.0,307.0h3v43.0h-3z M902.0,331.0h3v15.0h-3z M910.0,329.0h3v5.0h-3z M919.0,309.0h3v4.0h-3z M923.0,312.0h3v21.0h-3z M927.0,332.0h3v1.0h-3z M931.0,332.0h3v25.0h-3z M936.0,356.0h3v17.0h-3z M944.0,361.0h3v13.0h-3z M949.0,374.0h3v12.0h-3z M957.0,370.0h3v15.0h-3z M961.0,382.0h3v27.0h-3z M966.0,407.0h3v10.0h-3z M991.0,383.0h3v2.0h-3z M1000.0,381.0h3v8.0h-3z M1004.0,387.0h3v1.0h-3z M1008.0,388.0h3v26.0h-3z M1021.0,362.0h3v7.0h-3z M1026.0,369.0h3v16.0h-3z M1051.0,344.0h3v12.0h-3z M1055.0,356.0h3v20.0h-3z M1060.0,370.0h3v5.0h-3z M1064.0,370.0h3v8.0h-3z M1068.0,378.0h3v13.0h-3z M1073.0,390.0h3v2.0h-3z M1077.0,390.0h3v19.0h-3z M1081.0,407.0h3v2.0h-3z M1090.0,389.0h3v1.0h-3z M1102.0,385.0h3v7.0h-3z M1107.0,391.0h3v3.0h-3z M1111.0,393.0h3v5.0h-3z M1128.0,393.0h3v1.0h-3z M1132.0,390.0h3v3.0h-3z M1137.0,389.0h3v1.0h-3z M1167.0,349.0h3v15.0h-3z M1171.0,363.0h3v10.0h-3z M1175.0,373.0h3v2.0h-3z M1179.0,374.0h3v1.0h-3z M1188.0,370.0h3v5.0h-3z M1201.0,340.0h3v7.0h-3z M1205.0,345.0h3v4.0h-3z M1214.0,345.0h3v5.0h-3z M1218.0,349.0h3v14.0h-3z M1222.0,362.0h3v33.0h-3z M1231.0,388.0h3v6.0h-3z M1239.0,392.0h3v1.0h-3z M1244.0,393.0h3v18.0h-3z M1256.0,383.0h3v2.0h-3z M1261.0,386.0h3v25.0h-3z M1265.0,411.0h3v14.0h-3z M1269.0,425.0h3v34.0h-3z M1274.0,458.0h3v25.0h-3z M1282.0,472.0h3v15.0h-3z M1286.0,487.0h3v12.0h-3z M1291.0,498.0h3v43.0h-3z M1312.0,503.0h3v13.0h-3z M1316.0,515.0h3v12.0h-3z M1333.0,505.0h3v18.0h-3z M1346.0,520.0h3v3.0h-3z M1350.0,522.0h3v2.0h-3z M1363.0,521.0h3v3.0h-3z M1368.0,523.0h3v14.0h-3z M1372.0,536.0h3v1.0h-3z M1380.0,510.0h3v5.0h-3z M1385.0,514.0h3v13.0h-3z M1393.0,522.0h3v4.0h-3z M1402.0,514.0h3v11.0h-3z M1410.0,501.0h3v8.0h-3z M1415.0,508.0h3v14.0h-3z M1419.0,521.0h3v2.0h-3z M1423.0,522.0h3v4.0h-3z M1462.0,471.0h3v5.0h-3z M1466.0,476.0h3v13.0h-3z M1470.0,490.0h3v9.0h-3z M1474.0,498.0h3v2.0h-3z M1479.0,499.0h3v9.0h-3z M1483.0,507.0h3v5.0h-3z M1500.0,496.0h3v16.0h-3z M1504.0,510.0h3v10.0h-3z M1513.0,519.0h3v2.0h-3z M1530.0,498.0h3v13.0h-3z M1534.0,510.0h3v1.0h-3z M1547.0,502.0h3v2.0h-3z M1556.0,485.0h3v8.0h-3z M1573.0,480.0h3v15.0h-3z M1581.0,468.0h3v9.0h-3z M1590.0,472.0h3v2.0h-3z M1598.0,463.0h3v9.0h-3z M1603.0,472.0h3v12.0h-3z M1620.0,470.0h3v5.0h-3z M1624.0,474.0h3v3.0h-3z M1637.0,469.0h3v8.0h-3z" fill="#ffffff"/>
<path d="M10.6,579.9 C11.7,580.1 15.1,581.5 17.6,581.4 C20.1,581.3 23.6,579.9 26.4,579.2 C29.2,578.5 32.4,577.7 35.2,577.0 C38.0,576.3 41.2,575.4 44.0,574.8 C46.8,574.2 50.3,574.5 52.8,573.3 C55.2,572.1 57.3,569.7 59.4,567.1 C61.5,564.6 63.9,560.2 66.0,557.2 C68.1,554.3 70.5,550.7 72.6,548.4 C74.7,546.2 76.7,544.5 79.2,543.0 C81.6,541.4 85.2,539.6 88.0,538.6 C90.8,537.5 94.0,536.8 96.8,536.4 C99.6,535.9 102.7,535.7 105.6,535.9 C108.4,536.1 112.1,537.1 114.4,537.5 C116.6,537.8 118.3,539.0 119.9,538.1 C121.4,537.2 122.7,535.4 124.3,532.0 C125.8,528.5 128.2,522.2 129.8,516.6 C131.3,510.9 132.7,503.5 134.2,496.8 C135.6,490.1 137.1,481.1 138.6,474.8 C140.0,468.4 141.5,462.5 143.0,457.2 C144.4,451.9 145.9,446.0 147.3,441.8 C148.8,437.6 150.3,433.6 151.7,430.8 C153.2,428.0 154.4,425.9 156.1,424.2 C157.9,422.5 161.0,420.7 162.7,420.2 C164.5,419.8 165.4,420.6 167.1,421.6 C168.9,422.5 171.6,424.7 173.7,426.4 C175.9,428.0 178.2,430.3 180.3,431.9 C182.4,433.5 184.8,434.9 186.9,436.3 C189.0,437.7 191.4,439.7 193.5,440.7 C195.6,441.7 198.0,442.4 200.1,442.4 C202.2,442.4 204.6,441.5 206.7,440.7 C208.8,439.9 211.2,438.1 213.3,437.4 C215.4,436.7 217.8,436.1 219.9,436.3 C222.0,436.5 224.4,438.0 226.5,438.5 C228.6,439.0 231.0,439.4 233.1,439.6 C235.2,439.8 237.6,439.1 239.7,439.6 C241.8,440.1 244.2,441.4 246.3,442.9 C248.4,444.4 250.8,447.4 252.9,448.8 C255.0,450.2 257.8,451.6 259.5,451.7 C261.3,451.8 262.5,450.9 263.9,449.5 C265.3,448.1 266.9,445.3 268.3,442.9 C269.7,440.4 271.3,436.0 272.7,434.1 C274.1,432.2 275.3,431.3 277.1,430.8 C278.9,430.3 281.6,430.4 283.7,430.8 C285.8,431.1 287.9,431.2 290.0,433.0 C292.1,434.7 294.4,439.2 296.5,441.7 C298.6,444.1 301.0,445.8 303.1,448.2 C305.2,450.7 307.5,454.2 309.6,456.9 C311.7,459.7 314.1,463.2 316.2,465.7 C318.3,468.1 320.6,470.8 322.7,472.2 C324.8,473.6 327.1,474.1 329.2,474.4 C331.3,474.7 333.7,474.3 335.8,474.0 C337.9,473.6 340.2,473.2 342.3,472.2 C344.4,471.2 346.8,469.4 348.9,467.8 C350.9,466.3 353.3,464.3 355.4,462.4 C357.5,460.5 359.8,457.8 361.9,455.9 C364.0,453.9 366.0,452.2 368.5,450.4 C370.9,448.7 374.4,446.7 377.2,445.0 C380.0,443.2 383.5,441.8 385.9,439.5 C388.4,437.2 390.4,434.6 392.5,430.8 C394.5,427.0 396.9,420.1 399.0,415.5 C401.1,411.0 403.4,406.6 405.5,402.5 C407.6,398.3 410.0,393.9 412.1,389.4 C414.2,384.8 416.5,380.4 418.6,374.1 C420.7,367.8 423.1,358.2 425.1,350.1 C427.2,342.1 429.6,331.3 431.7,324.0 C433.8,316.7 436.8,308.2 438.2,304.4 C439.7,300.5 439.8,302.4 440.7,300.0 C441.6,297.5 442.8,292.6 444.0,289.1 C445.2,285.6 446.6,281.1 448.3,278.2 C450.1,275.2 452.4,272.2 454.9,270.6 C457.3,268.9 460.8,268.4 463.6,267.9 C466.4,267.5 469.9,267.7 472.3,267.9 C474.8,268.2 476.9,268.5 478.9,269.5 C480.8,270.4 482.7,271.9 484.3,273.8 C485.9,275.7 487.3,278.7 488.7,281.5 C490.1,284.2 491.8,288.6 493.0,291.3 C494.2,293.9 495.8,296.4 496.3,297.8 C496.8,299.2 495.2,298.6 496.0,300.0 C496.8,301.4 499.5,304.8 501.4,306.5 C503.4,308.3 505.9,310.9 508.0,310.9 C510.1,310.9 512.8,308.3 514.5,306.5 C516.3,304.8 517.6,302.8 518.9,300.0 C520.2,297.2 521.2,294.0 522.5,289.1 C523.7,284.2 525.4,276.4 526.8,269.5 C528.2,262.5 529.8,253.2 531.2,245.5 C532.6,237.8 534.1,228.8 535.5,221.5 C536.9,214.2 538.5,206.0 539.9,199.7 C541.3,193.4 542.9,187.0 544.3,182.3 C545.6,177.6 547.2,173.1 548.6,170.3 C550.0,167.5 551.6,165.9 553.0,164.8 C554.4,163.8 555.9,163.4 557.3,163.7 C558.7,164.1 560.3,165.1 561.7,167.0 C563.1,168.9 564.7,172.6 566.0,175.7 C567.4,178.9 569.0,183.7 570.4,186.6 C571.8,189.6 573.4,192.9 574.8,194.3 C576.2,195.7 577.7,195.9 579.1,195.4 C580.5,194.8 582.1,192.7 583.5,191.0 C584.9,189.2 586.5,186.4 587.8,184.5 C589.2,182.5 590.8,180.2 592.2,179.0 C593.6,177.8 594.8,177.2 596.6,176.8 C598.3,176.5 601.0,176.3 603.1,176.8 C605.2,177.3 607.6,178.2 609.6,180.1 C611.7,182.0 614.1,185.7 616.2,188.8 C618.3,192.0 620.6,196.6 622.7,199.7 C624.8,202.9 627.2,206.0 629.3,208.4 C631.4,210.9 633.7,213.2 635.8,215.0 C637.9,216.7 640.3,218.4 642.3,219.3 C644.4,220.3 646.8,220.8 648.9,221.1 C651.0,221.4 653.3,221.7 655.4,221.1 C657.5,220.4 660.2,218.8 662.0,217.1 C663.7,215.5 664.9,213.2 666.3,210.6 C667.7,208.0 669.3,203.9 670.7,200.8 C672.1,197.7 673.6,194.0 675.0,191.0 C676.4,188.0 678.0,184.7 679.4,182.3 C680.8,179.8 682.0,177.4 683.8,175.7 C685.5,174.1 688.2,172.5 690.3,171.8 C692.4,171.1 694.7,170.9 696.8,171.4 C698.9,171.8 701.6,173.1 703.4,174.6 C705.1,176.2 706.3,178.6 707.7,181.2 C709.1,183.8 710.7,187.3 712.1,191.0 C713.5,194.7 715.1,199.5 716.5,204.1 C717.9,208.6 719.4,214.4 720.8,219.3 C722.2,224.2 723.8,230.1 725.2,234.6 C726.6,239.1 728.1,244.4 729.5,247.7 C730.9,251.0 732.5,253.6 733.9,255.3 C735.3,257.0 736.9,258.1 738.3,258.6 C739.7,259.0 741.2,258.8 742.6,258.1 C744.0,257.4 745.6,256.2 747.0,254.2 C748.4,252.2 749.9,249.0 751.3,245.5 C752.7,242.0 754.3,236.9 755.7,232.4 C757.1,227.9 758.7,221.7 760.1,217.1 C761.4,212.6 763.0,208.3 764.4,204.1 C765.8,199.9 767.4,194.7 768.8,191.0 C770.2,187.3 771.7,183.4 773.1,181.2 C774.5,178.9 776.1,177.7 777.5,176.8 C778.9,176.0 780.5,175.2 781.9,175.7 C783.2,176.3 784.8,177.3 786.2,180.1 C787.6,182.9 789.2,188.3 790.6,193.2 C792.0,198.1 793.5,205.4 794.9,210.6 C796.3,215.8 798.5,223.3 799.3,225.9 C800.1,228.4 799.2,224.7 800.0,226.5 C800.8,228.4 803.0,234.0 804.4,237.4 C805.8,240.9 807.3,244.9 808.7,248.3 C810.1,251.8 811.7,255.9 813.1,259.2 C814.5,262.6 816.0,266.6 817.4,269.0 C818.8,271.5 820.4,273.3 821.8,274.5 C823.2,275.7 824.4,276.3 826.2,276.7 C827.9,277.1 830.6,276.9 832.7,277.1 C834.8,277.3 837.1,277.5 839.2,277.8 C841.3,278.0 843.9,279.0 845.8,278.9 C847.7,278.8 849.7,278.3 851.2,277.1 C852.8,275.9 854.2,273.4 855.6,271.2 C857.0,269.1 858.6,265.8 859.9,263.6 C861.3,261.4 862.7,258.7 864.3,257.5 C865.9,256.3 868.0,255.7 869.8,256.0 C871.5,256.2 873.5,258.2 875.2,259.2 C876.9,260.3 878.7,261.3 880.7,262.5 C882.6,263.7 885.4,264.6 887.2,266.9 C888.9,269.1 890.2,273.0 891.6,276.7 C892.9,280.3 894.5,285.2 895.9,289.8 C897.3,294.3 898.9,300.1 900.3,305.0 C901.7,309.9 903.2,315.7 904.6,320.3 C906.0,324.8 907.6,330.2 909.0,333.4 C910.4,336.5 911.6,338.5 913.4,339.9 C915.1,341.3 917.8,341.7 919.9,342.1 C922.0,342.5 924.5,342.1 926.4,342.5 C928.3,342.9 930.1,343.4 931.9,344.7 C933.6,346.0 935.4,348.4 937.3,350.8 C939.2,353.2 941.8,356.5 943.9,359.5 C946.0,362.5 948.3,366.2 950.4,369.3 C952.5,372.5 955.0,376.2 956.9,379.1 C958.9,382.1 960.8,384.9 962.4,387.8 C964.0,390.8 965.4,394.5 966.8,397.7 C968.2,400.8 969.7,404.7 971.1,407.5 C972.5,410.3 974.1,413.4 975.5,415.1 C976.9,416.8 978.4,417.8 979.8,418.4 C981.2,418.9 982.6,418.9 984.2,418.4 C985.8,417.8 987.7,416.8 989.6,415.1 C991.6,413.4 994.1,410.1 996.2,407.5 C998.3,404.9 1000.6,401.2 1002.7,398.7 C1004.8,396.3 1007.2,394.1 1009.3,392.2 C1011.4,390.3 1013.7,388.5 1015.8,386.8 C1017.9,385.0 1020.3,382.9 1022.3,381.3 C1024.4,379.7 1026.8,377.9 1028.9,376.9 C1031.0,376.0 1033.7,375.7 1035.4,375.2 C1037.2,374.7 1038.4,374.6 1039.8,373.7 C1041.2,372.7 1042.7,371.2 1044.1,369.3 C1045.5,367.4 1047.1,363.8 1048.5,361.7 C1049.9,359.6 1051.5,357.4 1052.9,356.2 C1054.3,355.1 1055.8,354.7 1057.2,354.7 C1058.6,354.7 1060.0,355.1 1061.6,356.2 C1063.1,357.4 1065.3,359.4 1067.0,361.7 C1068.8,364.0 1070.7,367.3 1072.5,370.4 C1074.2,373.5 1076.2,378.0 1077.9,381.3 C1079.7,384.6 1081.6,388.5 1083.4,391.1 C1085.1,393.7 1087.1,396.2 1088.8,397.7 C1090.6,399.2 1092.4,400.0 1094.3,400.5 C1096.2,400.9 1098.4,400.7 1100.8,400.5 C1103.3,400.3 1106.7,399.6 1109.5,399.2 C1112.3,398.7 1115.5,398.2 1118.3,397.7 C1121.0,397.1 1124.2,396.1 1127.0,395.5 C1129.8,394.9 1133.3,394.5 1135.7,394.0 C1138.1,393.4 1140.1,393.4 1142.2,392.2 C1144.3,391.1 1146.7,388.9 1148.8,386.8 C1150.9,384.7 1153.2,381.7 1155.3,379.1 C1157.4,376.5 1159.8,373.2 1161.9,370.4 C1163.9,367.6 1166.5,363.7 1168.4,361.7 C1170.3,359.7 1172.1,358.4 1173.8,357.8 C1175.6,357.1 1178.3,357.7 1179.3,357.8 C1180.3,357.9 1179.0,357.5 1180.0,358.3 C1181.0,359.1 1183.9,361.8 1185.4,362.7 C1187.0,363.6 1188.2,364.1 1189.8,363.8 C1191.4,363.4 1193.5,361.9 1195.3,360.5 C1197.0,359.1 1199.0,356.6 1200.7,355.1 C1202.5,353.5 1204.4,352.0 1206.2,350.7 C1207.9,349.4 1210.0,347.9 1211.6,347.0 C1213.2,346.1 1214.6,345.5 1216.0,345.3 C1217.4,345.0 1218.9,344.8 1220.3,345.7 C1221.7,346.6 1223.3,348.5 1224.7,350.7 C1226.1,352.9 1227.7,356.6 1229.0,359.4 C1230.4,362.2 1232.0,365.4 1233.4,368.1 C1234.8,370.9 1236.4,374.1 1237.8,376.9 C1239.2,379.7 1240.7,382.8 1242.1,385.6 C1243.5,388.4 1245.1,391.9 1246.5,394.3 C1247.9,396.7 1249.4,399.3 1250.8,400.8 C1252.2,402.3 1253.8,403.0 1255.2,403.7 C1256.6,404.4 1258.2,404.3 1259.6,405.2 C1261.0,406.1 1262.5,407.6 1263.9,409.6 C1265.3,411.5 1266.9,414.1 1268.3,417.2 C1269.7,420.3 1271.2,425.0 1272.6,429.2 C1274.0,433.4 1275.6,438.6 1277.0,443.4 C1278.4,448.1 1280.0,454.1 1281.4,458.6 C1282.8,463.1 1284.3,467.5 1285.7,471.7 C1287.1,475.9 1288.7,480.2 1290.1,484.8 C1291.5,489.3 1293.0,495.1 1294.4,500.0 C1295.8,504.9 1297.4,511.1 1298.8,515.3 C1300.2,519.5 1301.6,523.4 1303.2,526.2 C1304.7,529.0 1306.7,531.2 1308.6,532.7 C1310.5,534.3 1313.1,535.4 1315.1,536.0 C1317.2,536.6 1319.6,537.0 1321.7,536.6 C1323.8,536.3 1326.1,535.3 1328.2,533.8 C1330.3,532.3 1332.7,528.9 1334.8,527.3 C1336.9,525.6 1339.2,524.3 1341.3,523.6 C1343.4,522.9 1345.8,522.9 1347.8,522.9 C1349.9,522.9 1352.3,523.6 1354.4,523.6 C1356.5,523.6 1359.0,522.8 1360.9,522.9 C1362.8,523.0 1364.6,523.3 1366.4,524.0 C1368.1,524.7 1370.1,526.4 1371.8,527.3 C1373.6,528.1 1375.5,529.4 1377.3,529.5 C1379.0,529.6 1380.8,528.6 1382.7,527.9 C1384.6,527.2 1387.2,525.9 1389.3,525.1 C1391.4,524.3 1393.7,523.6 1395.8,522.9 C1397.9,522.2 1400.3,521.8 1402.3,520.7 C1404.4,519.7 1406.8,517.6 1408.9,516.4 C1411.0,515.2 1413.3,513.7 1415.4,513.1 C1417.5,512.5 1419.9,512.4 1422.0,512.7 C1424.1,512.9 1426.4,514.4 1428.5,514.9 C1430.6,515.3 1432.9,515.8 1435.0,515.7 C1437.1,515.6 1439.5,515.0 1441.6,514.2 C1443.7,513.4 1446.0,512.3 1448.1,510.9 C1450.2,509.5 1452.6,507.7 1454.7,505.5 C1456.8,503.2 1459.1,499.5 1461.2,496.8 C1463.3,494.0 1465.8,490.0 1467.7,488.0 C1469.7,486.1 1471.4,484.8 1473.2,484.3 C1474.9,483.9 1476.7,484.6 1478.6,485.2 C1480.6,485.8 1483.1,486.9 1485.2,488.0 C1487.3,489.2 1489.6,490.8 1491.7,492.4 C1493.8,494.0 1496.2,495.8 1498.3,497.8 C1500.3,499.9 1502.7,503.0 1504.8,505.5 C1506.9,507.9 1509.2,511.4 1511.3,513.1 C1513.4,514.9 1515.8,515.9 1517.9,516.4 C1520.0,516.9 1522.3,516.6 1524.4,516.4 C1526.5,516.1 1528.9,515.4 1531.0,514.9 C1533.0,514.3 1535.4,513.4 1537.5,512.7 C1539.6,512.0 1541.9,511.5 1544.0,510.5 C1546.1,509.5 1548.5,508.2 1550.6,506.6 C1552.7,504.9 1555.0,502.1 1557.1,500.0 C1559.2,497.9 1561.4,495.5 1563.7,493.5 C1565.9,491.4 1569.2,488.9 1571.2,487.2 C1573.2,485.6 1574.6,484.6 1576.1,483.1 C1577.7,481.7 1579.5,479.8 1581.1,478.2 C1582.6,476.7 1584.4,474.7 1586.0,473.3 C1587.5,471.9 1589.3,470.2 1590.9,469.2 C1592.5,468.2 1594.2,467.5 1595.8,467.1 C1597.4,466.6 1599.2,466.5 1600.7,466.4 C1602.3,466.4 1603.8,466.6 1605.7,466.7 C1607.5,466.9 1610.1,467.3 1612.2,467.6 C1614.3,467.8 1616.7,468.0 1618.8,468.4 C1620.9,468.8 1623.2,469.5 1625.3,470.0 C1627.4,470.5 1629.8,471.2 1631.9,471.7 C1634.0,472.1 1637.4,472.6 1638.5,472.8" fill="none" stroke="#c273d2" stroke-width="2.0" stroke-linecap="round"/>
</g>
<g clip-path="url(#cd)">
<path d="M10.5,789.0 L10.5,823.9 L15.3,821.3 L21.8,817.3 L28.3,814.7 L34.9,812.5 L39.2,810.8 L43.6,808.2 L48.0,806.4 L52.3,805.3 L55.6,799.9 L58.9,793.4 L62.1,787.9 L65.4,784.6 L69.8,780.7 L74.1,778.1 L81.7,776.3 L87.2,775.9 L93.7,774.4 L100.3,773.7 L106.8,774.8 L113.4,775.9 L119.9,777.0 L122.1,771.6 L125.3,760.7 L128.6,749.8 L131.9,734.5 L136.2,723.6 L140.6,719.2 L145.0,711.6 L149.3,709.0 L152.6,710.5 L156.9,713.8 L160.2,717.1 L162.4,722.5 L167.8,729.0 L174.4,735.6 L179.8,739.3 L184.2,738.4 L189.6,744.3 L195.1,750.8 L200.5,755.2 L206.0,754.6 L210.4,754.1 L215.8,758.5 L221.3,765.0 L226.7,769.8 L232.2,771.1 L239.8,772.6 L243.1,777.0 L247.4,782.5 L251.8,784.6 L256.1,785.7 L260.5,779.2 L264.9,772.6 L269.2,768.3 L274.7,770.5 L279.0,775.9 L285.6,782.0 L292.1,786.4 L298.6,790.1 L304.1,792.9 L308.4,798.8 L312.8,805.3 L317.2,812.5 L320.4,810.8 L324.8,808.2 L331.3,806.0 L337.9,803.8 L343.3,801.0 L348.8,796.6 L354.2,795.1 L358.6,790.1 L362.9,785.1 L368.4,783.5 L374.9,782.0 L380.0,782.5 L384.4,779.2 L388.7,771.6 L393.1,760.7 L397.4,751.9 L401.8,746.5 L406.2,743.7 L410.5,741.0 L414.9,734.5 L419.2,724.7 L423.6,714.9 L428.0,706.2 L432.3,698.5 L436.7,692.0 L439.9,687.6 L444.3,687.2 L446.5,689.8 L449.8,694.8 L454.1,698.5 L458.5,701.8 L461.7,705.7 L467.2,705.7 L471.6,710.5 L477.0,717.1 L481.4,723.6 L485.7,732.3 L489.0,745.4 L492.3,757.4 L496.6,766.8 L499.9,765.4 L504.3,768.3 L507.5,768.3 L510.8,762.8 L515.1,754.1 L519.5,743.2 L522.8,734.5 L527.1,726.9 L530.4,724.7 L533.7,716.0 L536.9,701.8 L540.2,694.2 L543.9,693.7 L546.8,697.4 L551.1,704.0 L555.5,710.5 L558.7,716.0 L562.0,724.7 L565.3,736.7 L569.6,743.2 L572.5,748.7 L575.1,741.0 L578.4,732.3 L582.7,726.2 L586.0,723.6 L588.2,729.0 L591.4,735.6 L595.8,738.9 L600.2,745.4 L604.5,750.8 L608.9,758.5 L613.2,766.1 L618.7,773.7 L623.1,779.2 L627.4,782.5 L630.7,782.5 L635.0,787.9 L639.4,792.3 L644.9,795.1 L651.4,796.6 L657.9,795.5 L662.3,792.3 L665.6,784.6 L668.8,775.9 L672.1,768.9 L676.0,766.1 L680.8,768.3 L685.2,769.8 L691.7,768.9 L697.2,772.6 L702.6,777.0 L707.0,782.5 L710.2,792.3 L714.6,802.1 L719.0,810.8 L722.2,821.7 L726.6,827.8 L732.0,830.8 L735.3,828.2 L739.7,820.6 L744.0,817.3 L748.4,810.8 L752.8,798.8 L757.1,786.8 L760.0,781.4 L764.4,774.8 L769.8,763.9 L774.2,766.1 L779.6,766.1 L782.9,771.6 L785.1,782.5 L787.2,797.7 L791.6,817.3 L796.0,815.1 L800.3,811.4 L804.7,813.0 L809.0,818.4 L813.4,823.9 L817.8,829.3 L822.1,830.0 L825.4,827.1 L829.8,823.9 L834.1,825.0 L839.6,826.5 L843.9,823.9 L848.3,820.6 L851.6,816.2 L855.9,806.4 L860.3,798.8 L864.6,798.8 L869.0,801.0 L872.3,805.3 L876.6,806.4 L882.1,806.4 L886.4,807.1 L889.7,819.5 L893.0,832.6 L897.3,840.2 L902.8,847.8 L910.4,847.4 L913.7,843.5 L916.9,836.9 L920.2,833.0 L926.8,832.2 L931.1,836.9 L936.6,844.6 L940.9,846.1 L945.3,848.9 L949.6,851.8 L954.0,848.9 L958.4,850.0 L962.7,855.5 L967.1,860.9 L971.4,863.1 L975.8,860.9 L980.2,853.3 L984.5,844.6 L988.9,835.9 L993.2,829.3 L997.6,822.8 L1002.0,818.4 L1005.2,816.2 L1009.6,819.5 L1012.9,816.2 L1016.1,807.5 L1019.4,801.0 L1023.8,797.3 L1029.2,795.5 L1034.7,792.9 L1039.0,790.1 L1042.3,782.5 L1045.6,774.8 L1048.8,771.6 L1052.1,771.1 L1056.5,774.8 L1060.8,778.1 L1065.2,781.4 L1069.5,787.9 L1073.9,794.4 L1078.3,802.1 L1082.2,808.6 L1087.0,806.4 L1091.3,804.7 L1096.8,801.6 L1103.3,799.5 L1109.9,799.5 L1117.5,799.9 L1126.2,798.8 L1132.8,797.7 L1139.3,795.5 L1140.0,793.4 L1144.4,789.0 L1149.8,782.5 L1155.3,775.9 L1159.6,770.5 L1163.5,766.1 L1168.3,767.6 L1172.7,771.6 L1177.1,774.2 L1182.5,775.9 L1189.0,778.5 L1193.4,772.6 L1197.8,767.2 L1203.2,765.0 L1209.8,764.6 L1215.2,765.4 L1218.5,769.4 L1221.7,777.0 L1225.0,785.7 L1228.3,793.4 L1232.6,799.9 L1238.1,804.3 L1242.5,808.6 L1245.7,813.4 L1249.0,813.0 L1253.4,809.7 L1257.7,806.4 L1262.1,811.9 L1266.4,819.5 L1269.7,828.2 L1273.0,839.1 L1276.2,848.9 L1280.6,857.7 L1285.0,865.3 L1288.2,870.7 L1290.4,879.5 L1292.6,883.8 L1295.9,883.8 L1301.3,880.5 L1305.7,875.1 L1310.0,869.6 L1314.4,868.6 L1318.7,867.5 L1323.1,864.2 L1327.5,856.6 L1331.8,848.9 L1337.3,844.6 L1342.7,840.2 L1349.3,835.9 L1355.8,830.4 L1360.2,826.5 L1364.5,823.9 L1370.0,823.9 L1373.2,824.3 L1376.5,818.4 L1380.9,813.0 L1386.3,809.7 L1392.9,807.5 L1398.3,803.2 L1403.8,798.8 L1408.1,793.4 L1412.5,791.2 L1417.9,792.9 L1423.4,795.1 L1428.8,794.4 L1434.3,792.3 L1439.7,787.9 L1445.2,784.6 L1451.7,781.4 L1456.1,774.8 L1459.3,769.4 L1462.6,765.0 L1467.0,766.1 L1471.3,769.4 L1476.8,773.7 L1481.1,778.1 L1484.4,782.0 L1489.9,781.8 L1495.3,781.4 L1499.7,783.5 L1504.0,789.0 L1508.4,793.4 L1512.8,797.3 L1518.2,797.7 L1522.6,795.1 L1526.9,792.3 L1530.8,792.3 L1533.0,792.9 L1539.5,792.9 L1546.0,791.2 L1549.3,787.9 L1552.6,782.9 L1556.9,780.3 L1562.4,777.7 L1566.8,774.8 L1570.0,773.3 L1573.3,774.2 L1577.7,769.4 L1583.1,767.2 L1588.6,765.0 L1594.0,763.3 L1597.3,762.8 L1600.5,765.0 L1604.9,768.9 L1610.4,771.1 L1615.8,771.6 L1621.3,773.3 L1626.7,775.9 L1632.2,777.0 L1638.0,778.1 L1638.0,789.0 Z" fill="#8e8e8e"/>
<rect x="10.5" y="788" width="1723" height="1" fill="#dcdcdc"/>
<path d="M10.5,823.9 C11.6,823.5 14.9,822.6 17.4,821.7 C19.9,820.8 23.4,819.4 26.2,818.4 C28.9,817.4 32.1,816.6 34.9,815.6 C37.7,814.5 40.8,813.0 43.6,811.9 C46.4,810.8 49.9,810.0 52.3,808.6 C54.8,807.2 56.8,804.9 58.9,803.2 C60.9,801.4 63.3,799.6 65.4,797.7 C67.5,795.8 70.2,792.8 71.9,791.2 C73.7,789.5 74.6,788.5 76.3,787.2 C78.0,786.0 80.4,784.7 82.8,783.5 C85.3,782.4 88.8,781.2 91.6,780.3 C94.3,779.3 97.5,778.3 100.3,777.7 C103.1,777.0 106.2,776.6 109.0,776.3 C111.8,776.1 115.8,775.9 117.7,775.9 C119.6,775.9 119.8,776.9 121.0,776.3 C122.2,775.8 123.9,774.3 125.3,772.6 C126.7,771.0 128.3,768.7 129.7,766.1 C131.1,763.5 132.5,759.6 134.1,756.3 C135.6,753.0 137.8,748.7 139.5,745.4 C141.3,742.1 143.4,738.3 145.0,735.6 C146.5,732.9 147.9,730.1 149.3,728.4 C150.7,726.6 152.1,725.5 153.7,724.7 C155.2,723.8 157.6,723.3 159.1,723.2 C160.7,723.0 161.7,723.0 163.5,723.6 C165.2,724.2 167.9,725.8 170.0,726.9 C172.1,728.0 174.5,729.4 176.6,730.6 C178.7,731.7 181.0,732.8 183.1,734.1 C185.2,735.3 187.6,736.9 189.6,738.4 C191.7,740.0 194.3,742.2 196.2,743.7 C198.1,745.1 199.7,746.5 201.6,747.6 C203.6,748.6 206.1,749.3 208.2,750.2 C210.3,751.1 212.6,751.9 214.7,753.0 C216.8,754.2 219.2,755.9 221.3,757.4 C223.3,758.9 225.7,761.0 227.8,762.4 C229.9,763.8 232.4,765.1 234.3,766.1 C236.3,767.1 237.9,767.7 239.8,768.9 C241.7,770.2 244.2,772.3 246.3,773.7 C248.4,775.1 250.9,776.6 252.9,777.7 C254.8,778.7 256.6,780.2 258.3,780.3 C260.1,780.3 262.0,778.9 263.8,778.1 C265.5,777.3 267.5,776.1 269.2,775.5 C271.0,774.9 272.7,774.4 274.7,774.4 C276.6,774.4 279.1,774.8 281.2,775.5 C283.3,776.1 285.6,777.6 287.7,778.5 C289.8,779.5 292.2,780.4 294.3,781.4 C296.4,782.3 298.7,783.5 300.8,784.6 C302.9,785.8 305.4,787.2 307.4,788.6 C309.3,790.0 311.1,791.7 312.8,793.4 C314.6,795.0 316.5,797.4 318.3,798.8 C320.0,800.2 322.0,801.4 323.7,802.1 C325.4,802.8 327.2,803.0 329.2,803.2 C331.1,803.3 333.6,803.3 335.7,803.2 C337.8,803.0 340.1,802.6 342.2,802.1 C344.3,801.5 346.7,800.5 348.8,799.9 C350.9,799.3 353.2,799.0 355.3,798.1 C357.4,797.3 359.8,795.6 361.9,794.4 C363.9,793.3 366.3,791.8 368.4,790.7 C370.5,789.7 373.1,788.5 374.9,787.9 C376.8,787.3 378.1,787.5 380.0,786.8 C381.9,786.1 384.4,785.6 386.5,783.5 C388.6,781.4 391.0,776.5 393.1,773.7 C395.2,770.9 397.5,768.5 399.6,766.1 C401.7,763.7 404.1,760.7 406.2,758.5 C408.3,756.2 410.6,754.2 412.7,751.9 C414.8,749.7 417.5,746.7 419.2,744.3 C421.0,741.9 422.0,739.5 423.6,736.7 C425.2,733.9 427.3,730.0 429.0,726.9 C430.8,723.7 432.8,720.0 434.5,717.1 C436.2,714.1 438.4,710.6 439.9,708.3 C441.5,706.1 442.9,704.0 444.3,702.9 C445.7,701.7 446.9,701.5 448.7,701.1 C450.4,700.8 453.1,700.6 455.2,700.7 C457.3,700.8 459.8,701.4 461.7,701.8 C463.7,702.1 465.3,702.1 467.2,702.9 C469.1,703.7 471.8,705.2 473.7,706.6 C475.7,708.0 477.4,709.8 479.2,711.6 C480.9,713.5 483.1,715.7 484.6,718.1 C486.2,720.6 487.6,723.9 489.0,726.9 C490.4,729.8 491.8,733.7 493.4,736.7 C494.9,739.6 497.1,742.8 498.8,745.4 C500.5,748.0 502.7,751.2 504.3,753.0 C505.8,754.8 507.2,756.0 508.6,756.7 C510.0,757.5 511.6,758.1 513.0,757.8 C514.4,757.6 515.8,756.5 517.3,755.2 C518.9,753.9 521.0,751.7 522.8,749.8 C524.5,747.8 526.5,745.7 528.2,743.2 C530.0,740.8 532.1,737.3 533.7,734.5 C535.2,731.7 536.6,728.4 538.0,725.8 C539.4,723.2 541.0,720.2 542.4,718.1 C543.8,716.1 545.4,714.2 546.8,713.1 C548.2,712.1 549.5,711.9 551.1,711.6 C552.7,711.3 555.0,711.0 556.6,711.2 C558.1,711.3 559.7,711.6 560.9,712.7 C562.1,713.8 563.0,716.2 564.2,718.1 C565.4,720.1 567.2,722.5 568.6,724.7 C570.0,726.9 571.5,730.6 572.9,731.9 C574.3,733.2 575.9,732.9 577.3,732.8 C578.7,732.6 580.1,731.6 581.6,731.2 C583.2,730.9 585.3,730.4 587.1,730.6 C588.8,730.7 590.8,731.5 592.5,732.3 C594.3,733.1 596.2,734.4 598.0,735.6 C599.7,736.8 601.7,738.4 603.4,739.9 C605.2,741.5 607.1,743.3 608.9,745.4 C610.6,747.5 612.6,750.6 614.3,753.0 C616.1,755.5 618.0,758.4 619.8,760.7 C621.5,762.9 623.5,765.3 625.2,767.2 C627.0,769.1 628.9,771.0 630.7,772.6 C632.4,774.3 634.4,776.1 636.1,777.7 C637.9,779.2 639.8,781.0 641.6,782.5 C643.3,783.9 645.3,785.7 647.0,786.8 C648.8,788.0 650.7,789.0 652.5,789.6 C654.2,790.3 656.4,790.7 657.9,790.7 C659.5,790.8 660.9,790.7 662.3,790.1 C663.7,789.5 665.1,788.2 666.6,786.8 C668.2,785.4 670.4,782.9 672.1,781.4 C673.8,779.8 676.0,778.0 677.5,777.0 C679.1,776.0 680.3,775.3 681.9,774.8 C683.5,774.3 685.4,774.0 687.4,773.7 C689.3,773.5 691.8,773.1 693.9,773.1 C696.0,773.1 698.5,773.3 700.4,773.7 C702.4,774.2 704.1,774.7 705.9,775.9 C707.6,777.1 709.6,779.3 711.3,781.4 C713.1,783.5 715.2,786.4 716.8,789.0 C718.4,791.6 719.6,794.7 721.1,797.7 C722.7,800.7 724.9,804.9 726.6,807.5 C728.3,810.1 730.3,812.6 732.0,814.1 C733.8,815.6 735.7,816.4 737.5,816.9 C739.2,817.4 741.2,817.6 742.9,817.3 C744.7,817.1 746.6,816.5 748.4,815.1 C750.1,813.8 752.1,810.9 753.8,808.6 C755.6,806.3 758.3,802.4 759.3,801.0 C760.3,799.6 759.2,801.1 760.0,799.9 C760.8,798.7 763.0,795.4 764.4,793.4 C765.8,791.3 767.3,788.7 768.7,786.8 C770.1,784.9 771.7,782.9 773.1,781.4 C774.5,779.8 776.0,777.9 777.4,777.0 C778.8,776.1 780.6,775.1 781.8,775.5 C783.0,775.8 783.8,777.2 785.1,779.2 C786.3,781.2 787.9,785.1 789.4,787.9 C791.0,790.7 793.1,794.4 794.9,796.6 C796.6,798.9 798.6,800.7 800.3,802.1 C802.1,803.5 804.0,803.9 805.8,805.3 C807.5,806.7 809.5,809.0 811.2,810.8 C813.0,812.5 814.9,814.8 816.7,816.2 C818.4,817.6 820.6,818.7 822.1,819.5 C823.7,820.3 824.9,821.0 826.5,821.3 C828.1,821.5 830.2,820.9 831.9,821.3 C833.7,821.6 835.8,822.9 837.4,823.4 C839.0,823.9 840.3,824.4 841.7,824.3 C843.1,824.2 844.5,823.4 846.1,822.8 C847.7,822.2 850.0,821.5 851.6,820.6 C853.1,819.7 854.5,818.6 855.9,817.3 C857.3,816.1 858.9,814.4 860.3,813.0 C861.7,811.6 863.2,809.6 864.6,808.6 C866.0,807.6 867.2,807.1 869.0,806.9 C870.7,806.6 873.4,806.8 875.5,806.9 C877.6,807.0 880.2,807.4 882.1,807.5 C884.0,807.6 886.0,806.6 887.5,807.5 C889.1,808.4 890.5,811.1 891.9,813.0 C893.3,814.9 894.7,817.2 896.2,819.5 C897.8,821.8 899.9,824.9 901.7,827.1 C903.4,829.4 905.4,832.2 907.1,833.7 C908.9,835.2 910.8,836.2 912.6,836.5 C914.3,836.9 916.1,836.1 918.0,835.9 C920.0,835.6 922.5,834.9 924.6,834.8 C926.7,834.6 929.2,834.2 931.1,834.8 C933.0,835.3 934.6,837.0 936.6,838.0 C938.5,839.1 941.0,840.4 943.1,841.3 C945.2,842.2 947.6,842.8 949.6,843.5 C951.7,844.2 954.1,844.7 956.2,845.7 C958.3,846.6 960.6,848.4 962.7,849.6 C964.8,850.8 967.3,852.4 969.3,853.3 C971.2,854.2 973.0,854.9 974.7,855.0 C976.5,855.2 978.4,855.2 980.2,854.4 C981.9,853.6 983.9,851.4 985.6,850.0 C987.4,848.6 989.3,847.2 991.1,845.7 C992.8,844.1 994.8,842.1 996.5,840.2 C998.3,838.3 1000.6,835.4 1002.0,833.7 C1003.4,831.9 1004.0,830.3 1005.2,829.3 C1006.5,828.4 1008.2,828.7 1009.6,827.8 C1011.0,826.9 1012.4,825.5 1014.0,823.9 C1015.5,822.2 1017.7,819.4 1019.4,817.3 C1021.1,815.2 1023.1,812.6 1024.9,810.8 C1026.6,809.0 1028.4,807.6 1030.3,806.0 C1032.2,804.4 1034.9,802.5 1036.8,801.0 C1038.8,799.5 1040.7,798.4 1042.3,796.6 C1043.9,794.9 1045.3,792.0 1046.6,790.1 C1048.0,788.2 1049.4,785.9 1051.0,784.6 C1052.6,783.3 1054.7,782.5 1056.5,782.0 C1058.2,781.5 1060.2,781.1 1061.9,781.4 C1063.7,781.6 1065.4,782.7 1067.4,783.5 C1069.3,784.3 1072.2,785.2 1073.9,786.4 C1075.6,787.6 1076.5,789.5 1078.3,791.2 C1080.0,792.8 1082.7,795.3 1084.8,796.6 C1086.9,797.9 1089.2,798.9 1091.3,799.5 C1093.4,800.0 1095.8,800.3 1097.9,800.3 C1100.0,800.3 1102.3,799.5 1104.4,799.5 C1106.5,799.5 1108.9,800.2 1111.0,800.3 C1113.0,800.5 1115.1,800.7 1117.5,800.5 C1119.9,800.4 1123.8,799.8 1126.2,799.5 C1128.7,799.1 1130.7,798.8 1132.8,798.4 C1134.8,797.9 1138.1,796.8 1139.3,796.6 C1140.5,796.4 1139.0,797.6 1140.0,797.3 C1141.0,796.9 1143.7,795.6 1145.4,794.4 C1147.2,793.3 1149.2,791.7 1150.9,790.1 C1152.6,788.5 1154.6,786.2 1156.3,784.6 C1158.1,783.1 1160.1,781.6 1161.8,780.3 C1163.5,779.0 1165.5,777.4 1167.2,776.6 C1169.0,775.8 1170.8,775.4 1172.7,775.3 C1174.6,775.1 1177.1,775.3 1179.2,775.5 C1181.3,775.7 1183.9,776.3 1185.8,776.6 C1187.7,776.8 1189.5,777.4 1191.2,777.0 C1193.0,776.6 1194.8,775.1 1196.7,774.2 C1198.6,773.2 1201.1,772.0 1203.2,771.1 C1205.3,770.3 1207.7,769.5 1209.8,768.9 C1211.8,768.4 1214.6,767.8 1216.3,767.8 C1218.0,767.9 1219.3,768.3 1220.7,769.4 C1222.0,770.5 1223.4,772.7 1225.0,774.8 C1226.6,776.9 1228.7,780.0 1230.5,782.5 C1232.2,784.9 1234.2,788.0 1235.9,790.1 C1237.7,792.2 1239.6,793.8 1241.4,795.5 C1243.1,797.3 1245.1,799.7 1246.8,801.0 C1248.6,802.3 1250.5,803.2 1252.3,803.8 C1254.0,804.4 1256.0,804.1 1257.7,804.7 C1259.5,805.3 1261.4,806.2 1263.2,807.5 C1264.9,808.8 1267.0,810.9 1268.6,813.0 C1270.2,815.1 1271.6,817.8 1273.0,820.6 C1274.4,823.4 1275.9,827.4 1277.3,830.4 C1278.7,833.4 1280.1,836.2 1281.7,839.1 C1283.3,842.1 1285.4,845.8 1287.1,848.9 C1288.9,852.1 1290.8,856.1 1292.6,858.7 C1294.3,861.4 1296.3,863.7 1298.0,865.3 C1299.8,866.9 1301.6,868.1 1303.5,868.8 C1305.4,869.4 1307.9,869.2 1310.0,869.2 C1312.1,869.2 1314.6,869.1 1316.6,868.8 C1318.5,868.4 1320.3,868.0 1322.0,867.0 C1323.8,866.1 1325.5,864.3 1327.5,862.7 C1329.4,861.1 1331.9,858.7 1334.0,857.0 C1336.1,855.3 1338.5,853.4 1340.5,851.8 C1342.6,850.1 1345.0,848.4 1347.1,846.8 C1349.2,845.1 1351.5,843.1 1353.6,841.3 C1355.7,839.6 1358.1,837.3 1360.2,835.9 C1362.3,834.4 1364.6,833.3 1366.7,832.2 C1368.8,831.0 1371.1,830.1 1373.2,828.7 C1375.3,827.3 1377.7,825.1 1379.8,823.4 C1381.9,821.8 1384.2,819.9 1386.3,818.4 C1388.4,816.9 1390.8,815.5 1392.9,814.1 C1395.0,812.7 1397.3,811.2 1399.4,809.7 C1401.5,808.2 1403.8,806.2 1405.9,804.7 C1408.0,803.2 1410.4,801.5 1412.5,800.3 C1414.6,799.1 1416.9,798.0 1419.0,797.3 C1421.1,796.6 1423.5,796.4 1425.6,796.0 C1427.7,795.6 1430.0,795.4 1432.1,794.9 C1434.2,794.4 1436.5,793.7 1438.6,792.9 C1440.7,792.1 1443.1,791.1 1445.2,790.1 C1447.3,789.1 1449.8,788.0 1451.7,786.8 C1453.6,785.6 1455.4,784.0 1457.2,782.5 C1458.9,780.9 1460.9,778.4 1462.6,777.0 C1464.4,775.6 1466.3,774.4 1468.1,773.7 C1469.8,773.1 1471.8,772.8 1473.5,772.9 C1475.3,772.9 1477.2,773.6 1479.0,774.2 C1480.7,774.7 1482.5,775.7 1484.4,776.3 C1486.3,777.0 1488.9,778.0 1491.0,778.5 C1493.0,779.1 1495.6,779.2 1497.5,779.8 C1499.4,780.5 1501.2,781.4 1502.9,782.5 C1504.7,783.5 1506.6,785.2 1508.4,786.4 C1510.1,787.6 1511.9,789.2 1513.8,790.1 C1515.8,790.9 1518.3,791.3 1520.4,791.6 C1522.5,791.9 1525.3,791.7 1526.9,791.8 C1528.6,792.0 1529.3,792.3 1530.8,792.5 C1532.3,792.6 1534.3,792.7 1536.2,792.7 C1538.2,792.7 1540.7,792.6 1542.8,792.3 C1544.9,791.9 1547.4,791.5 1549.3,790.7 C1551.2,789.9 1552.9,788.3 1554.8,787.2 C1556.7,786.2 1559.2,785.2 1561.3,784.2 C1563.4,783.2 1565.8,781.9 1567.8,780.9 C1569.9,779.9 1572.3,779.1 1574.4,778.1 C1576.5,777.1 1578.8,775.9 1580.9,774.8 C1583.0,773.8 1585.4,772.5 1587.5,771.6 C1589.6,770.6 1592.1,769.5 1594.0,768.9 C1595.9,768.3 1597.7,768.1 1599.5,767.8 C1601.2,767.6 1603.2,767.5 1604.9,767.6 C1606.6,767.8 1608.4,768.6 1610.4,768.9 C1612.3,769.3 1614.8,769.6 1616.9,770.0 C1619.0,770.4 1621.3,771.0 1623.4,771.6 C1625.5,772.1 1627.6,773.0 1630.0,773.7 C1632.3,774.4 1636.7,775.6 1638.0,775.9" fill="none" stroke="#ee5068" stroke-width="1.25"/>
</g>
<rect x="10.5" y="663" width="1814" height="1" fill="#e0e0e0"/>
<rect x="10.5" y="904" width="1814" height="1" fill="#b0b0b0"/>
<rect x="1733" y="28" width="1" height="912.5" fill="#c0c0c0"/>
<g filter="url(#nf)"><text x="17.8" y="45.7" font-size="12" fill="#cfcfcf" text-anchor="start" font-weight="normal" textLength="79.4" lengthAdjust="spacingAndGlyphs" >ETHUSDT SPOT</text></g>
<g filter="url(#nf)"><text x="104.3" y="45.7" font-size="12" fill="#cfcfcf" text-anchor="middle" font-weight="bold" >·</text></g>
<g filter="url(#nf)"><text x="110.6" y="45.7" font-size="12" fill="#cfcfcf" text-anchor="start" font-weight="normal" textLength="15.8" lengthAdjust="spacingAndGlyphs" >1日</text></g>
<g filter="url(#nf)"><text x="134.3" y="45.7" font-size="12" fill="#cfcfcf" text-anchor="middle" font-weight="bold" >·</text></g>
<g filter="url(#nf)"><text x="139.6" y="45.7" font-size="12" fill="#cfcfcf" text-anchor="start" font-weight="normal" textLength="27.3" lengthAdjust="spacingAndGlyphs" >Bybit</text></g>
<g filter="url(#nf)"><text x="175.0" y="45.7" font-size="12" fill="#cfcfcf" text-anchor="start" font-weight="normal" textLength="23.7" lengthAdjust="spacingAndGlyphs" >始値</text></g>
<g filter="url(#nf)"><text x="198.7" y="45.7" font-size="12" fill="#f2f2f2" text-anchor="start" font-weight="bold" textLength="46.8" lengthAdjust="spacingAndGlyphs" >2,369.70</text></g>
<g filter="url(#nf)"><text x="252.8" y="45.7" font-size="12" fill="#cfcfcf" text-anchor="start" font-weight="normal" textLength="23.7" lengthAdjust="spacingAndGlyphs" >高値</text></g>
<g filter="url(#nf)"><text x="276.5" y="45.7" font-size="12" fill="#f2f2f2" text-anchor="start" font-weight="bold" textLength="46.8" lengthAdjust="spacingAndGlyphs" >2,404.60</text></g>
<g filter="url(#nf)"><text x="330.7" y="45.7" font-size="12" fill="#cfcfcf" text-anchor="start" font-weight="normal" textLength="23.7" lengthAdjust="spacingAndGlyphs" >安値</text></g>
<g filter="url(#nf)"><text x="354.2" y="45.7" font-size="12" fill="#f2f2f2" text-anchor="start" font-weight="bold" textLength="46.8" lengthAdjust="spacingAndGlyphs" >2,312.73</text></g>
<g filter="url(#nf)"><text x="407.8" y="45.7" font-size="12" fill="#cfcfcf" text-anchor="start" font-weight="normal" textLength="23.7" lengthAdjust="spacingAndGlyphs" >終値</text></g>
<g filter="url(#nf)"><text x="431.5" y="45.7" font-size="12" fill="#f2f2f2" text-anchor="start" font-weight="bold" textLength="46.8" lengthAdjust="spacingAndGlyphs" >2,320.62</text></g>
<g filter="url(#nf)"><text x="17.8" y="62.7" font-size="12" fill="#cfcfcf" text-anchor="start" font-weight="normal" textLength="83.4" lengthAdjust="spacingAndGlyphs" >HMA (20, close)</text></g>
<g filter="url(#nf)"><text x="109.2" y="62.7" font-size="12" fill="#bb6fcb" text-anchor="start" font-weight="normal" textLength="46.1" lengthAdjust="spacingAndGlyphs" >2,339.39</text></g>
<g filter="url(#nf)"><text x="17.8" y="79.7" font-size="12" fill="#cfcfcf" text-anchor="start" font-weight="normal" textLength="128.5" lengthAdjust="spacingAndGlyphs" >BB (50, SMA, close, 2.5)</text></g>
<g filter="url(#nf)"><text x="17.8" y="96.7" font-size="12" fill="#cfcfcf" text-anchor="start" font-weight="normal" textLength="83.4" lengthAdjust="spacingAndGlyphs" >HMA (80, close)</text></g>
<g filter="url(#nf)"><text x="109.2" y="96.7" font-size="12" fill="#5b9cf0" text-anchor="start" font-weight="normal" textLength="46.1" lengthAdjust="spacingAndGlyphs" >2,321.04</text></g>
<g filter="url(#nf)"><text x="17.8" y="113.7" font-size="12" fill="#cfcfcf" text-anchor="start" font-weight="normal" textLength="158.6" lengthAdjust="spacingAndGlyphs" >BB · 240 (50, SMA, close, 2.5)</text></g>
<g filter="url(#nf)"><text x="17.8" y="130.7" font-size="12" fill="#cfcfcf" text-anchor="start" font-weight="normal" textLength="90.1" lengthAdjust="spacingAndGlyphs" >HMA (320, close)</text></g>
<g filter="url(#nf)"><text x="115.9" y="130.7" font-size="12" fill="#86d48a" text-anchor="start" font-weight="normal" textLength="45.8" lengthAdjust="spacingAndGlyphs" >1,827.04</text></g>
<g filter="url(#nf)"><text x="17.8" y="147.7" font-size="12" fill="#cfcfcf" text-anchor="start" font-weight="normal" textLength="115.5" lengthAdjust="spacingAndGlyphs" >HMA · 1D (320, close)</text></g>
<g filter="url(#nf)"><text x="17.8" y="164.7" font-size="12" fill="#cfcfcf" text-anchor="start" font-weight="normal" textLength="120.5" lengthAdjust="spacingAndGlyphs" >HMA · 240 (320, close)</text></g>
<g filter="url(#nf)"><text x="17.8" y="181.7" font-size="12" fill="#cfcfcf" text-anchor="start" font-weight="normal" textLength="109.1" lengthAdjust="spacingAndGlyphs" >HMA · 1D (80, close)</text></g>
<g filter="url(#nf)"><text x="17.8" y="198.7" font-size="12" fill="#cfcfcf" text-anchor="start" font-weight="normal" textLength="109.1" lengthAdjust="spacingAndGlyphs" >HMA · 1D (20, close)</text></g>
<g filter="url(#nf)"><text x="17.8" y="215.7" font-size="12" fill="#cfcfcf" text-anchor="start" font-weight="normal" textLength="149.2" lengthAdjust="spacingAndGlyphs" >一目均衡表® (9, 26, 52, 26)</text></g>
<g filter="url(#nf)"><text x="174.3" y="215.7" font-size="12" fill="#cfcfcf" text-anchor="start" font-weight="normal" textLength="46.1" lengthAdjust="spacingAndGlyphs" >2,289.19</text></g>
<g filter="url(#nf)"><text x="228.5" y="215.7" font-size="12" fill="#cfcfcf" text-anchor="start" font-weight="normal" textLength="45.7" lengthAdjust="spacingAndGlyphs" >2,187.52</text></g>
<g filter="url(#nf)"><text x="17.8" y="683.2" font-size="12" fill="#cfcfcf" text-anchor="start" font-weight="normal" textLength="119.0" lengthAdjust="spacingAndGlyphs" >MACD (close, 9, 17, 7)</text></g>
<g filter="url(#nf)"><text x="10.0" y="19.2" font-size="13" fill="#e0e0e0" text-anchor="start" font-weight="normal" textLength="336.7" lengthAdjust="spacingAndGlyphs" >4月 27, 2026 16:23 UTC+9、takatabaがTradingView.comで作成</text></g>
<g clip-path="url(#ca)">
<g filter="url(#nf)"><text x="1744.6" y="48.5" font-size="15" fill="#c9c9c9" text-anchor="start" font-weight="normal" textLength="61.5" lengthAdjust="spacingAndGlyphs" >5,600.00</text></g>
<g filter="url(#nf)"><text x="1744.6" y="101.2" font-size="15" fill="#c9c9c9" text-anchor="start" font-weight="normal" textLength="61.5" lengthAdjust="spacingAndGlyphs" >5,200.00</text></g>
<g filter="url(#nf)"><text x="1744.6" y="153.8" font-size="15" fill="#c9c9c9" text-anchor="start" font-weight="normal" textLength="61.5" lengthAdjust="spacingAndGlyphs" >4,800.00</text></g>
<g filter="url(#nf)"><text x="1744.6" y="206.5" font-size="15" fill="#c9c9c9" text-anchor="start" font-weight="normal" textLength="61.5" lengthAdjust="spacingAndGlyphs" >4,400.00</text></g>
<g filter="url(#nf)"><text x="1744.6" y="259.2" font-size="15" fill="#c9c9c9" text-anchor="start" font-weight="normal" textLength="61.5" lengthAdjust="spacingAndGlyphs" >4,000.00</text></g>
<g filter="url(#nf)"><text x="1744.6" y="311.8" font-size="15" fill="#c9c9c9" text-anchor="start" font-weight="normal" textLength="61.5" lengthAdjust="spacingAndGlyphs" >3,600.00</text></g>
<g filter="url(#nf)"><text x="1744.6" y="364.5" font-size="15" fill="#c9c9c9" text-anchor="start" font-weight="normal" textLength="61.5" lengthAdjust="spacingAndGlyphs" >3,200.00</text></g>
<g filter="url(#nf)"><text x="1744.6" y="417.2" font-size="15" fill="#c9c9c9" text-anchor="start" font-weight="normal" textLength="61.5" lengthAdjust="spacingAndGlyphs" >2,800.00</text></g>
<g filter="url(#nf)"><text x="1744.6" y="469.8" font-size="15" fill="#c9c9c9" text-anchor="start" font-weight="normal" textLength="61.5" lengthAdjust="spacingAndGlyphs" >2,400.00</text></g>
<g filter="url(#nf)"><text x="1744.6" y="522.5" font-size="15" fill="#c9c9c9" text-anchor="start" font-weight="normal" textLength="61.5" lengthAdjust="spacingAndGlyphs" >2,000.00</text></g>
<g filter="url(#nf)"><text x="1744.6" y="575.2" font-size="15" fill="#c9c9c9" text-anchor="start" font-weight="normal" textLength="61.5" lengthAdjust="spacingAndGlyphs" >1,600.00</text></g>
<g filter="url(#nf)"><text x="1744.6" y="627.8" font-size="15" fill="#c9c9c9" text-anchor="start" font-weight="normal" textLength="61.5" lengthAdjust="spacingAndGlyphs" >1,200.00</text></g>
<rect x="1735" y="118.4" width="78" height="22.0" rx="1.5" fill="#fbe23b"/>
<g filter="url(#nf)"><text x="1744.6" y="134.1" font-size="15" fill="#111111" text-anchor="start" font-weight="normal" textLength="61.5" lengthAdjust="spacingAndGlyphs" >4,960.00</text></g>
<rect x="1735" y="144.4" width="78" height="22.0" rx="1.5" fill="#fbe23b"/>
<g filter="url(#nf)"><text x="1744.6" y="160.1" font-size="15" fill="#111111" text-anchor="start" font-weight="normal" textLength="61.5" lengthAdjust="spacingAndGlyphs" >4,765.00</text></g>
<rect x="1735" y="214.6" width="78" height="22.0" rx="1.5" fill="#fbe23b"/>
<g filter="url(#nf)"><text x="1744.6" y="230.3" font-size="15" fill="#111111" text-anchor="start" font-weight="normal" textLength="61.5" lengthAdjust="spacingAndGlyphs" >4,230.00</text></g>
<rect x="1735" y="255.4" width="78" height="22.0" rx="1.5" fill="#fbe23b"/>
<g filter="url(#nf)"><text x="1744.6" y="271.1" font-size="15" fill="#111111" text-anchor="start" font-weight="normal" textLength="61.5" lengthAdjust="spacingAndGlyphs" >3,920.00</text></g>
<rect x="1735" y="288.7" width="78" height="22.0" rx="1.5" fill="#fbe23b"/>
<g filter="url(#nf)"><text x="1744.6" y="304.4" font-size="15" fill="#111111" text-anchor="start" font-weight="normal" textLength="61.5" lengthAdjust="spacingAndGlyphs" >3,670.00</text></g>
<rect x="1735" y="316.5" width="78" height="22.0" rx="1.5" fill="#fbe23b"/>
<g filter="url(#nf)"><text x="1744.6" y="332.2" font-size="15" fill="#111111" text-anchor="start" font-weight="normal" textLength="61.5" lengthAdjust="spacingAndGlyphs" >3,450.00</text></g>
<rect x="1735" y="350.8" width="78" height="179.2" rx="1.5" fill="#fbe23b"/>
<rect x="1735" y="532" width="78" height="91.8" rx="1.5" fill="#fbe23b"/>
<rect x="1735" y="465.4" width="78" height="40" fill="#ffffff"/>
<g filter="url(#nf)"><text x="1744.6" y="366.7" font-size="15" fill="#111111" text-anchor="start" font-weight="normal" textLength="61.5" lengthAdjust="spacingAndGlyphs" >2,992.34</text></g>
<g filter="url(#nf)"><text x="1744.6" y="389.7" font-size="15" fill="#111111" text-anchor="start" font-weight="normal" textLength="61.5" lengthAdjust="spacingAndGlyphs" >2,720.00</text></g>
<g filter="url(#nf)"><text x="1744.6" y="412.5" font-size="15" fill="#111111" text-anchor="start" font-weight="normal" textLength="61.5" lengthAdjust="spacingAndGlyphs" >2,620.00</text></g>
<g filter="url(#nf)"><text x="1744.6" y="434.9" font-size="15" fill="#111111" text-anchor="start" font-weight="normal" textLength="61.5" lengthAdjust="spacingAndGlyphs" >2,465.00</text></g>
<g filter="url(#nf)"><text x="1744.6" y="457.3" font-size="15" fill="#111111" text-anchor="start" font-weight="normal" textLength="61.5" lengthAdjust="spacingAndGlyphs" >2,400.00</text></g>
<g filter="url(#nf)"><text x="1744.6" y="520.9" font-size="15" fill="#111111" text-anchor="start" font-weight="normal" textLength="61.5" lengthAdjust="spacingAndGlyphs" >2,250.00</text></g>
<g filter="url(#nf)"><text x="1744.6" y="548.1" font-size="15" fill="#111111" text-anchor="start" font-weight="normal" textLength="61.5" lengthAdjust="spacingAndGlyphs" >1,800.00</text></g>
<g filter="url(#nf)"><text x="1744.6" y="571.5" font-size="15" fill="#111111" text-anchor="start" font-weight="normal" textLength="61.5" lengthAdjust="spacingAndGlyphs" >1,740.00</text></g>
<g filter="url(#nf)"><text x="1744.6" y="593.3" font-size="15" fill="#111111" text-anchor="start" font-weight="normal" textLength="61.5" lengthAdjust="spacingAndGlyphs" >1,535.00</text></g>
<g filter="url(#nf)"><text x="1744.6" y="616.3" font-size="15" fill="#111111" text-anchor="start" font-weight="normal" textLength="61.5" lengthAdjust="spacingAndGlyphs" >1,380.00</text></g>
<g filter="url(#nf)"><text x="1744.6" y="480.4" font-size="15" fill="#111111" text-anchor="start" font-weight="normal" textLength="61.5" lengthAdjust="spacingAndGlyphs" >2,320.62</text></g>
<g filter="url(#nf)"><text x="1744.6" y="499.9" font-size="15" fill="#6a6a6a" text-anchor="start" font-weight="normal" textLength="61.5" lengthAdjust="spacingAndGlyphs" >16:36:14</text></g>
</g>
<g clip-path="url(#cb)">
<g filter="url(#nf)"><text x="1744.3" y="670.2" font-size="15" fill="#c9c9c9" text-anchor="start" font-weight="normal" textLength="47.5" lengthAdjust="spacingAndGlyphs" >300.00</text></g>
<g filter="url(#nf)"><text x="1744.3" y="710.9" font-size="15" fill="#c9c9c9" text-anchor="start" font-weight="normal" textLength="47.5" lengthAdjust="spacingAndGlyphs" >200.00</text></g>
<g filter="url(#nf)"><text x="1744.3" y="752.3" font-size="15" fill="#c9c9c9" text-anchor="start" font-weight="normal" textLength="47.5" lengthAdjust="spacingAndGlyphs" >100.00</text></g>
<g filter="url(#nf)"><text x="1744.3" y="793.4" font-size="15" fill="#c9c9c9" text-anchor="start" font-weight="normal" textLength="31.3" lengthAdjust="spacingAndGlyphs" >0.00</text></g>
<g filter="url(#nf)"><text x="1744.3" y="835.1" font-size="15" fill="#c9c9c9" text-anchor="start" font-weight="normal" textLength="55.8" lengthAdjust="spacingAndGlyphs" >−100.00</text></g>
<g filter="url(#nf)"><text x="1744.3" y="876.2" font-size="15" fill="#c9c9c9" text-anchor="start" font-weight="normal" textLength="55.8" lengthAdjust="spacingAndGlyphs" >−200.00</text></g>
</g>
<g filter="url(#nf)"><text x="93.8" y="925.9" font-size="15" fill="#c9c9c9" text-anchor="middle" font-weight="normal" >5月</text></g>
<g filter="url(#nf)"><text x="226.4" y="925.9" font-size="15" fill="#c9c9c9" text-anchor="middle" font-weight="normal" >6月</text></g>
<g filter="url(#nf)"><text x="354.7" y="925.9" font-size="15" fill="#c9c9c9" text-anchor="middle" font-weight="normal" >7月</text></g>
<g filter="url(#nf)"><text x="487.2" y="925.9" font-size="15" fill="#c9c9c9" text-anchor="middle" font-weight="normal" >8月</text></g>
<g filter="url(#nf)"><text x="619.8" y="925.9" font-size="15" fill="#c9c9c9" text-anchor="middle" font-weight="normal" >9月</text></g>
<g filter="url(#nf)"><text x="748.0" y="925.9" font-size="15" fill="#c9c9c9" text-anchor="middle" font-weight="normal" >10月</text></g>
<g filter="url(#nf)"><text x="880.6" y="925.9" font-size="15" fill="#c9c9c9" text-anchor="middle" font-weight="normal" >11月</text></g>
<g filter="url(#nf)"><text x="1008.9" y="925.9" font-size="15" fill="#c9c9c9" text-anchor="middle" font-weight="normal" >12月</text></g>
<g filter="url(#nf)"><text x="1274.0" y="925.9" font-size="15" fill="#c9c9c9" text-anchor="middle" font-weight="normal" >2月</text></g>
<g filter="url(#nf)"><text x="1393.7" y="925.9" font-size="15" fill="#c9c9c9" text-anchor="middle" font-weight="normal" >3月</text></g>
<g filter="url(#nf)"><text x="1526.3" y="925.9" font-size="15" fill="#c9c9c9" text-anchor="middle" font-weight="normal" >4月</text></g>
<g filter="url(#nf)"><text x="1654.6" y="925.9" font-size="15" fill="#c9c9c9" text-anchor="middle" font-weight="normal" >5月</text></g>
<g filter="url(#nf)"><text x="1141.5" y="925.9" font-size="15" fill="#e8e8e8" text-anchor="middle" font-weight="bold" >2026</text></g>
<g fill="#e4e4e4"><path d="M12,962.3h11.7v14.7h-5.9v-8.8H12z"/><circle cx="27.6" cy="965.2" r="2.9"/><path d="M33.5,962.3h8l-6.2,14.7h-7.9z"/></g>
<g filter="url(#nf)"><text x="49.4" y="977.0" font-size="20.5" fill="#e4e4e4" text-anchor="start" font-weight="bold" textLength="120.6" lengthAdjust="spacingAndGlyphs" >TradingView</text></g>
</g></svg></body></html>
